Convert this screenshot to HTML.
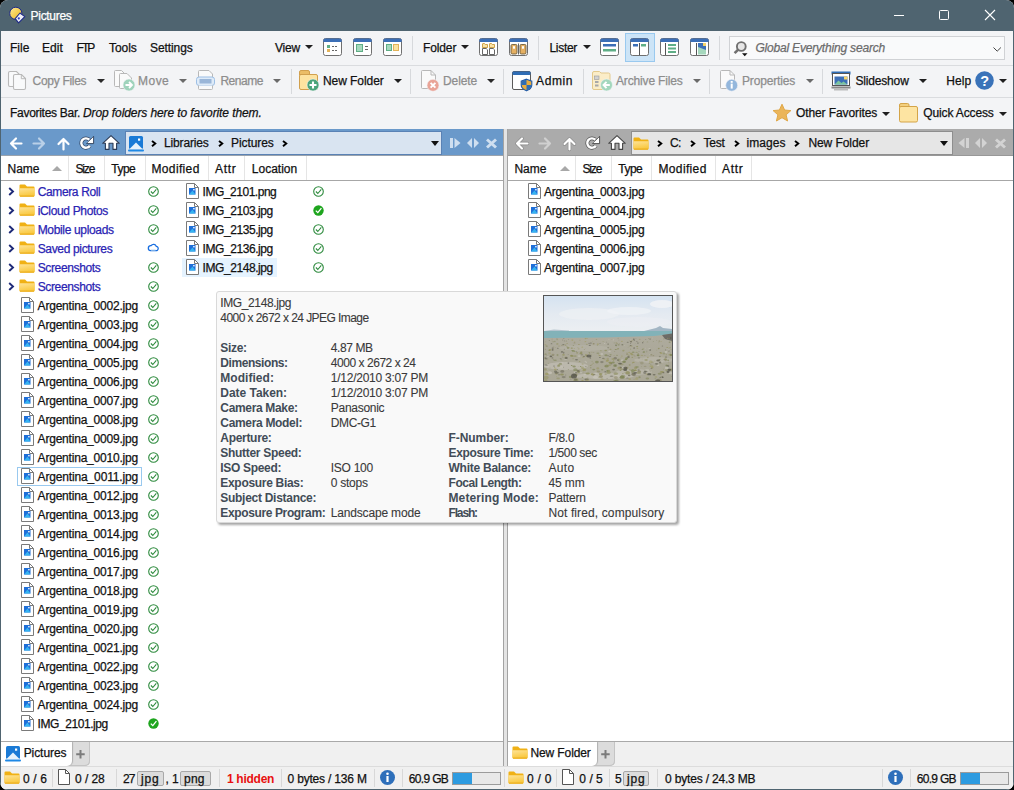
<!DOCTYPE html><html><head><meta charset="utf-8"><style>
*{margin:0;padding:0;box-sizing:border-box}
html,body{width:1014px;height:790px;overflow:hidden;background:#000}
body{font-family:"Liberation Sans",sans-serif;font-size:11.5px;color:#1a1a1a;position:relative}
.ab{position:absolute}
.t{position:absolute;white-space:nowrap;-webkit-text-stroke:0.25px currentColor}
.win{position:absolute;left:0;top:0;width:1014px;height:790px;background:#f3f4f6;border-radius:8px;overflow:hidden}
svg{position:absolute;overflow:visible}
</style></head><body>
<div class="win">
<svg width="0" height="0" style="position:absolute"><defs><linearGradient id="fg" x1="0" y1="0" x2="0.3" y2="1"><stop offset="0" stop-color="#fee397"/><stop offset="1" stop-color="#f9c83e"/></linearGradient></defs></svg>
<div class="ab" style="left:0px;top:0px;width:1014px;height:31px;background:#4f6470;"></div>
<svg style="left:8px;top:6px" width="18" height="18" viewBox="0 0 18 18"><defs><linearGradient id="ag" x1="0" y1="0" x2="1" y2="1"><stop offset="0" stop-color="#fdeaa0"/><stop offset="0.5" stop-color="#f6cf55"/><stop offset="1" stop-color="#e9b830"/></linearGradient></defs><circle cx="7.8" cy="7.3" r="6.1" fill="url(#ag)" stroke="#1e2a88" stroke-width="1"/><path d="M12 7L16.8 10.6L10.6 16.8L7.2 12.6Z" fill="#efeff6" stroke="#1e2a88" stroke-width="1.1" stroke-linejoin="round"/><circle cx="10.8" cy="12.4" r="1.1" fill="#2b3cc8"/></svg>
<div class="t" style="left:30.6px;top:8.64px;font-size:12px;line-height:14.4px;color:#ffffff;font-weight:normal;font-style:normal;letter-spacing:-0.307px;">Pictures</div>
<div class="ab" style="left:894px;top:15px;width:10px;height:1px;background:#ffffff;"></div>
<div class="ab" style="left:939px;top:10px;width:10px;height:10px;border:1px solid #fff;border-radius:1.5px"></div>
<svg style="left:985px;top:10px" width="10" height="10" viewBox="0 0 10 10"><path d="M0 0L10 10M10 0L0 10" stroke="#fff" stroke-width="1.1"/></svg>
<div class="ab" style="left:0px;top:31px;width:1px;height:759px;background:#4f6470;"></div>
<div class="ab" style="left:1013px;top:31px;width:1px;height:759px;background:#4f6470;"></div>
<div class="ab" style="left:0px;top:789px;width:1014px;height:1px;background:#4f6470;"></div>
<div class="ab" style="left:1px;top:31px;width:1012px;height:34px;background:#f3f4f6;"></div>
<div class="t" style="left:10px;top:40.64px;font-size:12px;line-height:14.4px;color:#111;font-weight:normal;font-style:normal;letter-spacing:-0.012px;">File</div>
<div class="t" style="left:42px;top:40.64px;font-size:12px;line-height:14.4px;color:#111;font-weight:normal;font-style:normal;letter-spacing:0.041px;">Edit</div>
<div class="t" style="left:76.5px;top:40.64px;font-size:12px;line-height:14.4px;color:#111;font-weight:normal;font-style:normal;letter-spacing:-1.932px;">FTP</div>
<div class="t" style="left:109px;top:40.64px;font-size:12px;line-height:14.4px;color:#111;font-weight:normal;font-style:normal;letter-spacing:-0.053px;">Tools</div>
<div class="t" style="left:150px;top:40.64px;font-size:12px;line-height:14.4px;color:#111;font-weight:normal;font-style:normal;letter-spacing:-0.080px;">Settings</div>
<div class="t" style="left:275px;top:40.64px;font-size:12px;line-height:14.4px;color:#111;font-weight:normal;font-style:normal;letter-spacing:-0.198px;">View</div>
<svg style="left:305px;top:45px" width="8" height="4" viewBox="0 0 8 4"><path d="M0 0H8L4.0 4Z" fill="#1f1f1f"/></svg>
<svg style="left:323px;top:38px" width="19" height="18" viewBox="0 0 19 18"><rect x="0.5" y="0.5" width="18" height="17" rx="2" fill="#fff" stroke="#6f6f6f"/><rect x="0.5" y="0.5" width="18" height="3.5" rx="1.5" fill="#3c6fb6"/><rect x="0.5" y="2" width="18" height="2" fill="#3c6fb6"/><rect x="4" y="7" width="3" height="3" fill="#5fae86"/><rect x="4" y="11" width="3" height="3" fill="#e3b35a"/><path d="M9 8.5h2M12 8.5h2M9 12.5h2M12 12.5h2" stroke="#666" stroke-width="1"/></svg>
<svg style="left:353px;top:38px" width="19" height="18" viewBox="0 0 19 18"><rect x="0.5" y="0.5" width="18" height="17" rx="2" fill="#fff" stroke="#6f6f6f"/><rect x="0.5" y="0.5" width="18" height="3.5" rx="1.5" fill="#3c6fb6"/><rect x="0.5" y="2" width="18" height="2" fill="#3c6fb6"/><rect x="3.5" y="6.5" width="6" height="7" fill="#a6d8bd" stroke="#5fae86"/><path d="M12 8.5h3M12 11.5h3" stroke="#666"/></svg>
<svg style="left:383px;top:38px" width="19" height="18" viewBox="0 0 19 18"><rect x="0.5" y="0.5" width="18" height="17" rx="2" fill="#fff" stroke="#6f6f6f"/><rect x="0.5" y="0.5" width="18" height="3.5" rx="1.5" fill="#3c6fb6"/><rect x="0.5" y="2" width="18" height="2" fill="#3c6fb6"/><rect x="3.5" y="6.5" width="5" height="6" fill="#a6d8bd" stroke="#5fae86"/><rect x="10.5" y="6.5" width="5" height="6" fill="#fbe2a0" stroke="#e3b35a"/></svg>
<div class="ab" style="left:412px;top:36px;width:1px;height:24px;background:#d7d9dc;"></div>
<div class="t" style="left:423px;top:40.64px;font-size:12px;line-height:14.4px;color:#111;font-weight:normal;font-style:normal;letter-spacing:-0.123px;">Folder</div>
<svg style="left:461px;top:45px" width="8" height="4" viewBox="0 0 8 4"><path d="M0 0H8L4.0 4Z" fill="#1f1f1f"/></svg>
<svg style="left:479px;top:38px" width="19" height="18" viewBox="0 0 19 18"><rect x="0.5" y="0.5" width="18" height="17" rx="2" fill="#fff" stroke="#6f6f6f"/><rect x="0.5" y="0.5" width="18" height="3.5" rx="1.5" fill="#3c6fb6"/><rect x="0.5" y="2" width="18" height="2" fill="#3c6fb6"/><path d="M3.5 9.5V6Q3.5 5.5 4 5.5H5.5L6.3 6.5H8.5V9.5Z" fill="#fbe3a6" stroke="#c99a3a" stroke-width="0.9"/><path d="M3.5 10.5H7.2L8.5 11.8V16.5H3.5Z" fill="#fff" stroke="#555" stroke-width="0.9"/><path d="M10.5 9.5V6Q10.5 5.5 11 5.5H12.5L13.3 6.5H15.5V9.5Z" fill="#fbe3a6" stroke="#c99a3a" stroke-width="0.9"/><path d="M10.5 10.5H14.2L15.5 11.8V16.5H10.5Z" fill="#fff" stroke="#555" stroke-width="0.9"/></svg>
<svg style="left:509px;top:38px" width="19" height="18" viewBox="0 0 19 18"><rect x="0.5" y="0.5" width="18" height="17" rx="2" fill="#fff" stroke="#6f6f6f"/><rect x="0.5" y="0.5" width="18" height="3.5" rx="1.5" fill="#3c6fb6"/><rect x="0.5" y="2" width="18" height="2" fill="#3c6fb6"/><rect x="2" y="6.5" width="6" height="9.5" rx="1.2" fill="#e5b062" stroke="#6b5a3a" stroke-width="0.9"/><rect x="11" y="6.5" width="6" height="9.5" rx="1.2" fill="#e5b062" stroke="#6b5a3a" stroke-width="0.9"/><rect x="4" y="8.2" width="2" height="2.5" fill="#fff"/><rect x="13" y="8.2" width="2" height="2.5" fill="#fff"/><path d="M9.5 5.5v11" stroke="#555" stroke-width="0.9"/></svg>
<div class="ab" style="left:538px;top:36px;width:1px;height:24px;background:#d7d9dc;"></div>
<div class="t" style="left:549.5px;top:40.64px;font-size:12px;line-height:14.4px;color:#111;font-weight:normal;font-style:normal;letter-spacing:-0.309px;">Lister</div>
<svg style="left:583px;top:45px" width="8" height="4" viewBox="0 0 8 4"><path d="M0 0H8L4.0 4Z" fill="#1f1f1f"/></svg>
<svg style="left:600px;top:38px" width="19" height="18" viewBox="0 0 19 18"><rect x="0.5" y="0.5" width="18" height="17" rx="2" fill="#fff" stroke="#6f6f6f"/><rect x="0.5" y="0.5" width="18" height="3.5" rx="1.5" fill="#3c6fb6"/><rect x="0.5" y="2" width="18" height="2" fill="#3c6fb6"/><rect x="3" y="6" width="13" height="2.5" fill="#3c6fb6"/><rect x="3" y="11" width="13" height="2.5" fill="#5fae86"/></svg>
<div class="ab" style="left:625px;top:33px;width:30px;height:29px;background:#cce4f7;border:1px solid #99c9ef"></div>
<svg style="left:630px;top:38px" width="19" height="18" viewBox="0 0 19 18"><rect x="0.5" y="0.5" width="18" height="17" rx="2" fill="#fff" stroke="#6f6f6f"/><rect x="0.5" y="0.5" width="18" height="3.5" rx="1.5" fill="#3c6fb6"/><rect x="0.5" y="2" width="18" height="2" fill="#3c6fb6"/><rect x="3" y="6" width="5" height="2.5" fill="#3c6fb6"/><rect x="11" y="6" width="5" height="2.5" fill="#5fae86"/><path d="M9.5 5v12" stroke="#555"/></svg>
<svg style="left:660px;top:38px" width="19" height="18" viewBox="0 0 19 18"><rect x="0.5" y="0.5" width="18" height="17" rx="2" fill="#fff" stroke="#6f6f6f"/><rect x="0.5" y="0.5" width="18" height="3.5" rx="1.5" fill="#3c6fb6"/><rect x="0.5" y="2" width="18" height="2" fill="#3c6fb6"/><path d="M5.5 5v12" stroke="#555"/><rect x="8" y="6" width="8" height="2" fill="#5fae86"/><rect x="8" y="9.5" width="8" height="2" fill="#5fae86"/><rect x="8" y="13" width="8" height="2" fill="#5fae86"/></svg>
<svg style="left:690px;top:38px" width="19" height="18" viewBox="0 0 19 18"><rect x="0.5" y="0.5" width="18" height="17" rx="2" fill="#fff" stroke="#6f6f6f"/><rect x="0.5" y="0.5" width="18" height="3.5" rx="1.5" fill="#3c6fb6"/><rect x="0.5" y="2" width="18" height="2" fill="#3c6fb6"/><path d="M6.5 5v12" stroke="#555"/><path d="M8 5h6v3l2 2v6.5h-8z" fill="#a6d8bd"/><path d="M8 5h5l3 3v4l-8-3z" fill="#3c6fb6"/><rect x="13" y="5" width="3" height="3" fill="#f6d46a"/></svg>
<div class="ab" style="left:719px;top:36px;width:1px;height:24px;background:#d7d9dc;"></div>
<div class="ab" style="left:729px;top:36px;width:276px;height:24px;background:#f9fafb;border:1px solid #d0d2d5"></div>
<svg style="left:733px;top:41px" width="16" height="16" viewBox="0 0 16 16"><circle cx="8.3" cy="5.5" r="4.4" fill="#e6e6e6" stroke="#707070" stroke-width="1.9"/><path d="M5.2 8.6L1.6 12.2" stroke="#707070" stroke-width="2.6"/><path d="M9 12.3h5.5l-2.75 3z" fill="#111"/></svg>
<div class="t" style="left:755.4px;top:40.64px;font-size:12px;line-height:14.4px;color:#6b6b6b;font-weight:normal;font-style:italic;letter-spacing:-0.186px;">Global Everything search</div>
<svg style="left:993px;top:46.5px" width="9" height="5" viewBox="0 0 9 5"><path d="M0.5 0.5L4.2 4.2L7.9 0.5" stroke="#444" fill="none" stroke-width="1"/></svg>
<div class="ab" style="left:1px;top:65px;width:1012px;height:1px;background:#dadcdf;"></div>
<svg style="left:8px;top:71px" width="20" height="20" viewBox="0 0 20 20"><path d="M0.5 2Q0.5 0.5 2 0.5H8.5L11.5 3.5V14Q11.5 15.5 10 15.5H2Q0.5 15.5 0.5 14Z" fill="#f9fafb" stroke="#b9b9b9" stroke-width="1.1"/><path d="M5.5 5Q5.5 3.5 7 3.5H13.5L17.5 7.5V17Q17.5 18.5 16 18.5H7Q5.5 18.5 5.5 17Z" fill="#f9fafb" stroke="#b9b9b9" stroke-width="1.1"/><path d="M13.3 3.7V7.7H17.3" fill="none" stroke="#b9b9b9" stroke-width="1"/></svg>
<div class="t" style="left:32.5px;top:73.64px;font-size:12px;line-height:14.4px;color:#8d8d8d;font-weight:normal;font-style:normal;letter-spacing:-0.287px;">Copy Files</div>
<svg style="left:97px;top:79px" width="8" height="4" viewBox="0 0 8 4"><path d="M0 0H8L4.0 4Z" fill="#2a2a2a"/></svg>
<svg style="left:114px;top:70px" width="22" height="22" viewBox="0 0 22 22"><path d="M0.5 1.5Q0.5 0.5 1.5 0.5H7.5L10.5 3.5V16.5H1.5Q0.5 16.5 0.5 15.5Z" fill="#fafafa" stroke="#b8b8b8"/><path d="M5.5 4.5Q5.5 3.5 6.5 3.5H13L17.5 8V18.5H6.5Q5.5 18.5 5.5 17.5Z" fill="#fafafa" stroke="#b8b8b8"/><circle cx="15" cy="15" r="6" fill="#9fd3bb" stroke="#f3f4f6" stroke-width="0.6"/><path d="M11.5 15h6M15 12l3 3l-3 3" stroke="#fff" stroke-width="1.8" fill="none"/></svg>
<div class="t" style="left:138px;top:73.64px;font-size:12px;line-height:14.4px;color:#8d8d8d;font-weight:normal;font-style:normal;letter-spacing:0.485px;">Move</div>
<svg style="left:178.5px;top:79px" width="8" height="4" viewBox="0 0 8 4"><path d="M0 0H8L4.0 4Z" fill="#6a6a6a"/></svg>
<svg style="left:196px;top:70px" width="20" height="21" viewBox="0 0 20 21"><path d="M2.5 7V1.5Q2.5 0.5 3.5 0.5H13L16.5 4V7" fill="#fafafa" stroke="#b8b8b8"/><rect x="0.5" y="7" width="18" height="8.5" rx="2.5" fill="#deebf8" stroke="#9dbfe5"/><rect x="3.5" y="9" width="12" height="4.5" fill="#9ab6d8"/><path d="M2.5 15.5V18.5Q2.5 19.5 3.5 19.5H15.5Q16.5 19.5 16.5 18.5V15.5" fill="#fafafa" stroke="#b8b8b8"/></svg>
<div class="t" style="left:220.4px;top:73.64px;font-size:12px;line-height:14.4px;color:#8d8d8d;font-weight:normal;font-style:normal;letter-spacing:-0.452px;">Rename</div>
<svg style="left:273px;top:79px" width="8" height="4" viewBox="0 0 8 4"><path d="M0 0H8L4.0 4Z" fill="#6a6a6a"/></svg>
<div class="ab" style="left:291px;top:69px;width:1px;height:25px;background:#d7d9dc;"></div>
<svg style="left:299px;top:70px" width="22" height="22" viewBox="0 0 22 22"><path d="M0.5 5V2Q0.5 0.5 2 0.5H9Q10.5 0.5 10.5 2V4.5" fill="#ebbd66" stroke="#d1a04e"/><rect x="0.5" y="4.5" width="18" height="15" rx="1.5" fill="#fde3a0" stroke="#d1a04e"/><path d="M1 4.5h10" stroke="#d1a04e"/><circle cx="14" cy="15" r="6" fill="#4ba47a" stroke="#f3f4f6" stroke-width="0.6"/><path d="M14 11.5v7M10.5 15h7" stroke="#fff" stroke-width="2.1"/></svg>
<div class="t" style="left:323px;top:73.64px;font-size:12px;line-height:14.4px;color:#111;font-weight:normal;font-style:normal;letter-spacing:-0.062px;">New Folder</div>
<svg style="left:393.5px;top:79px" width="8" height="4" viewBox="0 0 8 4"><path d="M0 0H8L4.0 4Z" fill="#1f1f1f"/></svg>
<div class="ab" style="left:410px;top:69px;width:1px;height:25px;background:#d7d9dc;"></div>
<svg style="left:421px;top:70px" width="20" height="22" viewBox="0 0 20 22"><path d="M0.5 1.5Q0.5 0.5 1.5 0.5H10L14.5 5V18.5H1.5Q0.5 18.5 0.5 17.5Z" fill="#fafafa" stroke="#b8b8b8"/><path d="M10 0.5V5H14.5" fill="none" stroke="#b8b8b8"/><circle cx="12" cy="15.3" r="6" fill="#e9a497" stroke="#f3f4f6" stroke-width="0.6"/><path d="M9.6 12.9l4.8 4.8M14.4 12.9l-4.8 4.8" stroke="#fff" stroke-width="1.9"/></svg>
<div class="t" style="left:443px;top:73.64px;font-size:12px;line-height:14.4px;color:#8d8d8d;font-weight:normal;font-style:normal;letter-spacing:-0.098px;">Delete</div>
<svg style="left:487px;top:79px" width="8" height="4" viewBox="0 0 8 4"><path d="M0 0H8L4.0 4Z" fill="#2a2a2a"/></svg>
<div class="ab" style="left:503px;top:69px;width:1px;height:25px;background:#d7d9dc;"></div>
<svg style="left:512px;top:71px" width="21" height="20" viewBox="0 0 21 20"><rect x="0.5" y="0.5" width="18" height="18" rx="1.5" fill="#fff" stroke="#5a5a5a"/><rect x="0.5" y="0.5" width="18" height="3.5" rx="1" fill="#2f6db5"/><path d="M14.5 8.2L19.8 10.2V14C19.8 17 17.5 18.6 14.5 19.8C11.5 18.6 9.2 17 9.2 14V10.2Z" fill="#e9ac3e" stroke="#1f5aa8" stroke-width="1.1"/><path d="M14.5 8.5V14H9.5V14C9.5 11 9.5 10.4 9.5 10.4Z" fill="#2f6db5"/><path d="M14.5 14H19.5C19.5 17 17.3 18.5 14.5 19.5Z" fill="#2f6db5"/></svg>
<div class="t" style="left:536px;top:73.64px;font-size:12px;line-height:14.4px;color:#111;font-weight:normal;font-style:normal;letter-spacing:0.622px;">Admin</div>
<div class="ab" style="left:583px;top:69px;width:1px;height:25px;background:#d7d9dc;"></div>
<svg style="left:592px;top:71px" width="22" height="22" viewBox="0 0 22 22"><path d="M0.5 2Q0.5 0.5 2 0.5H7.5L9 2H16.5Q18 2 18 3.5V17.2Q18 18.5 16.5 18.5H2Q0.5 18.5 0.5 17V2Z" fill="#fbedc8" stroke="#e3c98c"/><rect x="2.5" y="5" width="4.5" height="3.5" fill="#d2d2d2" stroke="#9a9a9a" stroke-width="0.6"/><rect x="3" y="10" width="3.5" height="2" fill="#a8a8a8"/><rect x="3" y="13.5" width="3.5" height="2" fill="#a8a8a8"/><circle cx="14.5" cy="14" r="6" fill="#a3d7bd" stroke="#f3f4f6" stroke-width="0.6"/><path d="M17.8 14h-6M14.5 10.8l-3 3.2l3 3.2" stroke="#fff" stroke-width="1.9" fill="none"/></svg>
<div class="t" style="left:616px;top:73.64px;font-size:12px;line-height:14.4px;color:#8d8d8d;font-weight:normal;font-style:normal;letter-spacing:-0.157px;">Archive Files</div>
<svg style="left:692.5px;top:79px" width="8" height="4" viewBox="0 0 8 4"><path d="M0 0H8L4.0 4Z" fill="#6a6a6a"/></svg>
<div class="ab" style="left:709px;top:69px;width:1px;height:25px;background:#d7d9dc;"></div>
<svg style="left:720px;top:70px" width="20" height="22" viewBox="0 0 20 22"><path d="M0.5 1.5Q0.5 0.5 1.5 0.5H10L14.5 5V18.5H1.5Q0.5 18.5 0.5 17.5Z" fill="#fafafa" stroke="#b8b8b8"/><path d="M10 0.5V5H14.5" fill="none" stroke="#b8b8b8"/><circle cx="11.7" cy="15.2" r="6" fill="#94b7dc" stroke="#f3f4f6" stroke-width="0.6"/><rect x="10.7" y="13.6" width="2" height="5" fill="#fff"/><rect x="10.7" y="11" width="2" height="1.8" fill="#fff"/></svg>
<div class="t" style="left:742px;top:73.64px;font-size:12px;line-height:14.4px;color:#8d8d8d;font-weight:normal;font-style:normal;letter-spacing:-0.155px;">Properties</div>
<svg style="left:805.5px;top:79px" width="8" height="4" viewBox="0 0 8 4"><path d="M0 0H8L4.0 4Z" fill="#6a6a6a"/></svg>
<div class="ab" style="left:822px;top:69px;width:1px;height:25px;background:#d7d9dc;"></div>
<svg style="left:831px;top:71px" width="20" height="20" viewBox="0 0 20 20"><rect x="0.5" y="0.5" width="19" height="3" fill="#2f6db5"/><rect x="1.5" y="2.5" width="17" height="12" fill="#fff" stroke="#555"/><path d="M3.5 5.5h13v8h-13z" fill="#3c6fb6"/><path d="M3.5 13.5l4-4l3 2.5l2-1.5l4 3z" fill="#7cc59e"/><rect x="13" y="5.5" width="3.5" height="3" fill="#f6d46a"/><path d="M0.5 15.5h19v2h-19z" fill="#888"/><path d="M3 17.5h14v2h-14z" fill="#bbb"/></svg>
<div class="t" style="left:855.4px;top:73.64px;font-size:12px;line-height:14.4px;color:#111;font-weight:normal;font-style:normal;letter-spacing:-0.162px;">Slideshow</div>
<svg style="left:919px;top:79px" width="8" height="4" viewBox="0 0 8 4"><path d="M0 0H8L4.0 4Z" fill="#1f1f1f"/></svg>
<div class="t" style="left:946.3px;top:73.64px;font-size:12px;line-height:14.4px;color:#111;font-weight:normal;font-style:normal;letter-spacing:0.040px;">Help</div>
<svg style="left:975px;top:71px" width="20" height="20" viewBox="0 0 20 20"><circle cx="9.5" cy="9.5" r="9.3" fill="#3a73b9"/><text x="9.6" y="14.6" text-anchor="middle" font-family="Liberation Sans" font-weight="bold" font-size="14.5" fill="#fff">?</text></svg>
<svg style="left:999px;top:79px" width="8" height="4" viewBox="0 0 8 4"><path d="M0 0H8L4.0 4Z" fill="#1f1f1f"/></svg>
<div class="ab" style="left:1px;top:97px;width:1012px;height:1px;background:#dadcdf;"></div>
<div class="t" style="left:10px;top:105.64px;font-size:12px;line-height:14.4px;color:#111;font-weight:normal;font-style:normal;letter-spacing:-0.287px;">Favorites Bar.</div>
<div class="t" style="left:83px;top:105.64px;font-size:12px;line-height:14.4px;color:#111;font-weight:normal;font-style:italic;letter-spacing:-0.097px;">Drop folders here to favorite them.</div>
<svg style="left:772px;top:103px" width="20" height="19" viewBox="0 0 20 19"><path d="M10 1.2l2.6 5.8l6.3 0.6l-4.8 4.2l1.5 6.2l-5.6-3.3l-5.6 3.3l1.5-6.2l-4.8-4.2l6.3-0.6z" fill="#ebb55a" stroke="#e0a848" stroke-width="1" stroke-linejoin="round"/></svg>
<div class="t" style="left:796px;top:105.64px;font-size:12px;line-height:14.4px;color:#111;font-weight:normal;font-style:normal;letter-spacing:-0.100px;">Other Favorites</div>
<svg style="left:882px;top:112px" width="8" height="4" viewBox="0 0 8 4"><path d="M0 0H8L4.0 4Z" fill="#1f1f1f"/></svg>
<svg style="left:899px;top:103px" width="20" height="20" viewBox="0 0 20 20"><path d="M0.5 4V2Q0.5 0.5 2 0.5H8.5Q10 0.5 10 2V3.5" fill="#f2cf7e" stroke="#d4a448"/><rect x="0.5" y="3.5" width="18" height="15.5" rx="1.5" fill="#fde4a2" stroke="#d4a448"/></svg>
<div class="t" style="left:923.3px;top:105.64px;font-size:12px;line-height:14.4px;color:#111;font-weight:normal;font-style:normal;letter-spacing:-0.139px;">Quick Access</div>
<svg style="left:999px;top:112px" width="8" height="4" viewBox="0 0 8 4"><path d="M0 0H8L4.0 4Z" fill="#1f1f1f"/></svg>
<div class="ab" style="left:1px;top:129px;width:502px;height:27px;background:#6a99ca;"></div>
<div class="ab" style="left:503px;top:129px;width:1px;height:637px;background:#a3a3a3;"></div>
<div class="ab" style="left:504px;top:129px;width:3px;height:637px;background:#e4e4e4;"></div>
<div class="ab" style="left:507px;top:129px;width:1px;height:637px;background:#a3a3a3;"></div>
<div class="ab" style="left:508px;top:129px;width:505px;height:27px;background:#ababab;"></div>
<div class="ab" style="left:1px;top:155px;width:502px;height:1px;background:#9aa3ad;"></div>
<div class="ab" style="left:508px;top:155px;width:505px;height:1px;background:#989898;"></div>
<div class="ab" style="left:1px;top:156px;width:502px;height:1px;background:#d4d4d4;"></div>
<div class="ab" style="left:508px;top:156px;width:505px;height:1px;background:#d4d4d4;"></div>
<svg style="left:8.5px;top:136.5px" width="14" height="13" viewBox="0 0 14 13"><path d="M12.5 6.5H2M7 1.5L2 6.5L7 11.5" stroke="#fff" stroke-width="2.2" fill="none" stroke-linejoin="round" stroke-linecap="round"/></svg>
<svg style="left:32.5px;top:136.5px" width="14" height="13" viewBox="0 0 14 13"><path d="M0.5 6.5H11M6 1.5L11 6.5L6 11.5" stroke="#b9d0e8" stroke-width="2.2" fill="none" stroke-linejoin="round" stroke-linecap="round"/></svg>
<svg style="left:56.5px;top:136.5px" width="13" height="13" viewBox="0 0 13 13"><path d="M6.5 12.5V2M1.5 7L6.5 2L11.5 7" stroke="#fff" stroke-width="2.2" fill="none" stroke-linejoin="round" stroke-linecap="round"/></svg>
<svg style="left:80px;top:136px" width="14" height="14" viewBox="0 0 14 14"><path d="M9.3 3.7A4.7 4.7 0 1 0 9.85 9.7" stroke="#2a3a55" stroke-width="3.8" fill="none" opacity="0.85"/><path d="M6.6 7.6H13.6V0.3Z" fill="#fff" stroke="#2a3a55" stroke-width="0.9" stroke-linejoin="round"/><path d="M9.3 3.7A4.7 4.7 0 1 0 9.85 9.7" stroke="#fff" stroke-width="2.4" fill="none"/><path d="M7.3 7H13V1.6Z" fill="#fff"/></svg>
<svg style="left:102px;top:135px" width="18" height="15" viewBox="0 0 18 15"><path d="M9 0.6L17.3 8.3H14.6V14.4H11V8.3H7V14.4H3.4V8.3H0.7Z" fill="#fff" stroke="#2a3a55" stroke-width="1.1" stroke-linejoin="round"/></svg>
<svg style="left:514.5px;top:136.5px" width="14" height="13" viewBox="0 0 14 13"><path d="M12.5 6.5H2M7 1.5L2 6.5L7 11.5" stroke="#666" stroke-width="3.3" fill="none" stroke-linejoin="round" stroke-linecap="round" opacity="0.55"/><path d="M12.5 6.5H2M7 1.5L2 6.5L7 11.5" stroke="#fff" stroke-width="2.2" fill="none" stroke-linejoin="round" stroke-linecap="round"/></svg>
<svg style="left:538.5px;top:136.5px" width="14" height="13" viewBox="0 0 14 13"><path d="M0.5 6.5H11M6 1.5L11 6.5L6 11.5" stroke="#d0d0d0" stroke-width="2.2" fill="none" stroke-linejoin="round" stroke-linecap="round"/></svg>
<svg style="left:562.5px;top:136.5px" width="13" height="13" viewBox="0 0 13 13"><path d="M6.5 12.5V2M1.5 7L6.5 2L11.5 7" stroke="#666" stroke-width="3.3" fill="none" stroke-linejoin="round" stroke-linecap="round" opacity="0.55"/><path d="M6.5 12.5V2M1.5 7L6.5 2L11.5 7" stroke="#fff" stroke-width="2.2" fill="none" stroke-linejoin="round" stroke-linecap="round"/></svg>
<svg style="left:586px;top:136px" width="14" height="14" viewBox="0 0 14 14"><path d="M9.3 3.7A4.7 4.7 0 1 0 9.85 9.7" stroke="#444" stroke-width="3.8" fill="none" opacity="0.85"/><path d="M6.6 7.6H13.6V0.3Z" fill="#fff" stroke="#444" stroke-width="0.9" stroke-linejoin="round"/><path d="M9.3 3.7A4.7 4.7 0 1 0 9.85 9.7" stroke="#fff" stroke-width="2.4" fill="none"/><path d="M7.3 7H13V1.6Z" fill="#fff"/></svg>
<svg style="left:608px;top:135px" width="18" height="15" viewBox="0 0 18 15"><path d="M9 0.6L17.3 8.3H14.6V14.4H11V8.3H7V14.4H3.4V8.3H0.7Z" fill="#fff" stroke="#444" stroke-width="1.1" stroke-linejoin="round"/></svg>
<div class="ab" style="left:125px;top:131px;width:317px;height:24px;background:#d9e4f1;border:1px solid #5a82b5"></div>
<svg style="left:128px;top:136px" width="16" height="16" viewBox="0 0 16 16"><rect x="1" y="0" width="14" height="13" rx="1.5" fill="#1a7ad6"/><path d="M1.5 13L8 6.5L14.5 13Z" fill="#e6f2fc"/><rect x="10" y="2.5" width="2.2" height="2.2" fill="#fff"/><rect x="0" y="13.5" width="16" height="2" rx="1" fill="#1e88e5"/></svg>
<svg style="left:151px;top:140px" width="6" height="8" viewBox="0 0 6 8"><path d="M1 0.9L4.3 3.6L1 6.3" stroke="#000" stroke-width="1.9" fill="none"/></svg>
<div class="t" style="left:164px;top:135.64px;font-size:12px;line-height:14.4px;color:#111;font-weight:normal;font-style:normal;letter-spacing:-0.152px;">Libraries</div>
<svg style="left:218px;top:140px" width="6" height="8" viewBox="0 0 6 8"><path d="M1 0.9L4.3 3.6L1 6.3" stroke="#000" stroke-width="1.9" fill="none"/></svg>
<div class="t" style="left:231px;top:135.64px;font-size:12px;line-height:14.4px;color:#111;font-weight:normal;font-style:normal;letter-spacing:-0.078px;">Pictures</div>
<svg style="left:282px;top:140px" width="6" height="8" viewBox="0 0 6 8"><path d="M1 0.9L4.3 3.6L1 6.3" stroke="#000" stroke-width="1.9" fill="none"/></svg>
<svg style="left:431px;top:141px" width="8" height="5" viewBox="0 0 8 5"><path d="M0 0H8L4.0 5Z" fill="#111"/></svg>
<svg style="left:450px;top:137px" width="11" height="11" viewBox="0 0 11 11"><rect x="0" y="1" width="3" height="10" fill="#cfdff0"/><path d="M4.5 1L10.5 6L4.5 11Z" fill="#cfdff0"/></svg>
<svg style="left:467px;top:137px" width="12" height="11" viewBox="0 0 12 11"><path d="M5 1L0 6L5 11Z" fill="#cfdff0"/><path d="M7 1L12 6L7 11Z" fill="#cfdff0"/></svg>
<svg style="left:486px;top:139px" width="11" height="9" viewBox="0 0 11 9"><path d="M1 0.5L10 8.5M10 0.5L1 8.5" stroke="#cfdff0" stroke-width="3"/></svg>
<div class="ab" style="left:631px;top:131px;width:322px;height:24px;background:#e6e6e6;border:1px solid #8e8e8e"></div>
<svg style="left:633px;top:137px" width="16" height="13" viewBox="0 0 16 13"><path d="M0.5 1.5Q0.5 0.5 1.5 0.5H6L8 2.5H14.5Q15.5 2.5 15.5 3.5V11.5Q15.5 12.5 14.5 12.5H1.5Q0.5 12.5 0.5 11.5Z" fill="#f0b115"/><path d="M0.5 4.2H15.5V11.5Q15.5 12.5 14.5 12.5H1.5Q0.5 12.5 0.5 11.5Z" fill="url(#fg)"/><path d="M1 12.1H15" stroke="#e9a614" stroke-width="0.9"/></svg>
<svg style="left:657px;top:140px" width="6" height="8" viewBox="0 0 6 8"><path d="M1 0.9L4.3 3.6L1 6.3" stroke="#000" stroke-width="1.9" fill="none"/></svg>
<div class="t" style="left:670px;top:135.64px;font-size:12px;line-height:14.4px;color:#111;font-weight:normal;font-style:normal;letter-spacing:-0.700px;">C:</div>
<svg style="left:690px;top:140px" width="6" height="8" viewBox="0 0 6 8"><path d="M1 0.9L4.3 3.6L1 6.3" stroke="#000" stroke-width="1.9" fill="none"/></svg>
<div class="t" style="left:703.6px;top:135.64px;font-size:12px;line-height:14.4px;color:#111;font-weight:normal;font-style:normal;letter-spacing:-0.269px;">Test</div>
<svg style="left:734px;top:140px" width="6" height="8" viewBox="0 0 6 8"><path d="M1 0.9L4.3 3.6L1 6.3" stroke="#000" stroke-width="1.9" fill="none"/></svg>
<div class="t" style="left:746.6px;top:135.64px;font-size:12px;line-height:14.4px;color:#111;font-weight:normal;font-style:normal;letter-spacing:0.023px;">images</div>
<svg style="left:794px;top:140px" width="6" height="8" viewBox="0 0 6 8"><path d="M1 0.9L4.3 3.6L1 6.3" stroke="#000" stroke-width="1.9" fill="none"/></svg>
<div class="t" style="left:808.4px;top:135.64px;font-size:12px;line-height:14.4px;color:#111;font-weight:normal;font-style:normal;letter-spacing:-0.062px;">New Folder</div>
<svg style="left:939.5px;top:141px" width="8" height="5" viewBox="0 0 8 5"><path d="M0 0H8L4.0 5Z" fill="#111"/></svg>
<svg style="left:958px;top:137px" width="11" height="11" viewBox="0 0 11 11"><path d="M6.5 1L0.5 6L6.5 11Z" fill="#d3d3d3"/><rect x="8" y="1" width="3" height="10" fill="#d3d3d3"/></svg>
<svg style="left:975px;top:137px" width="12" height="11" viewBox="0 0 12 11"><path d="M5 1L0 6L5 11Z" fill="#d3d3d3"/><path d="M7 1L12 6L7 11Z" fill="#d3d3d3"/></svg>
<svg style="left:995px;top:139px" width="11" height="9" viewBox="0 0 11 9"><path d="M1 0.5L10 8.5M10 0.5L1 8.5" stroke="#d3d3d3" stroke-width="3"/></svg>
<div class="ab" style="left:1px;top:156px;width:502px;height:24px;background:#ffffff;"></div>
<div class="ab" style="left:1px;top:180px;width:502px;height:1px;background:#a7a7a7;"></div>
<div class="ab" style="left:508px;top:156px;width:505px;height:24px;background:#ffffff;"></div>
<div class="ab" style="left:508px;top:180px;width:505px;height:1px;background:#a7a7a7;"></div>
<div class="t" style="left:7.6px;top:161.64px;font-size:12px;line-height:14.4px;color:#111;font-weight:normal;font-style:normal;letter-spacing:-0.070px;">Name</div>
<svg style="left:52px;top:166px" width="10" height="5" viewBox="0 0 10 5"><path d="M0 5L5 0L10 5Z" fill="#a8a8a8"/></svg>
<div class="ab" style="left:68px;top:156px;width:1px;height:24px;background:#e5e5e5;"></div>
<div class="ab" style="left:104px;top:156px;width:1px;height:24px;background:#e5e5e5;"></div>
<div class="ab" style="left:145px;top:156px;width:1px;height:24px;background:#e5e5e5;"></div>
<div class="ab" style="left:208px;top:156px;width:1px;height:24px;background:#e5e5e5;"></div>
<div class="ab" style="left:244px;top:156px;width:1px;height:24px;background:#e5e5e5;"></div>
<div class="ab" style="left:306px;top:156px;width:1px;height:24px;background:#e5e5e5;"></div>
<div class="t" style="left:75.4px;top:161.64px;font-size:12px;line-height:14.4px;color:#111;font-weight:normal;font-style:normal;letter-spacing:-1.115px;">Size</div>
<div class="t" style="left:111.3px;top:161.64px;font-size:12px;line-height:14.4px;color:#111;font-weight:normal;font-style:normal;letter-spacing:-0.539px;">Type</div>
<div class="t" style="left:151.5px;top:161.64px;font-size:12px;line-height:14.4px;color:#111;font-weight:normal;font-style:normal;letter-spacing:0.349px;">Modified</div>
<div class="t" style="left:215px;top:161.64px;font-size:12px;line-height:14.4px;color:#111;font-weight:normal;font-style:normal;letter-spacing:0.711px;">Attr</div>
<div class="t" style="left:251.8px;top:161.64px;font-size:12px;line-height:14.4px;color:#111;font-weight:normal;font-style:normal;letter-spacing:0.004px;">Location</div>
<div class="t" style="left:514.5px;top:161.64px;font-size:12px;line-height:14.4px;color:#111;font-weight:normal;font-style:normal;letter-spacing:-0.070px;">Name</div>
<svg style="left:560px;top:166px" width="10" height="5" viewBox="0 0 10 5"><path d="M0 5L5 0L10 5Z" fill="#a8a8a8"/></svg>
<div class="ab" style="left:575px;top:156px;width:1px;height:24px;background:#e5e5e5;"></div>
<div class="ab" style="left:611px;top:156px;width:1px;height:24px;background:#e5e5e5;"></div>
<div class="ab" style="left:651px;top:156px;width:1px;height:24px;background:#e5e5e5;"></div>
<div class="ab" style="left:715px;top:156px;width:1px;height:24px;background:#e5e5e5;"></div>
<div class="ab" style="left:751px;top:156px;width:1px;height:24px;background:#e5e5e5;"></div>
<div class="t" style="left:582.4px;top:161.64px;font-size:12px;line-height:14.4px;color:#111;font-weight:normal;font-style:normal;letter-spacing:-1.115px;">Size</div>
<div class="t" style="left:618.3px;top:161.64px;font-size:12px;line-height:14.4px;color:#111;font-weight:normal;font-style:normal;letter-spacing:-0.539px;">Type</div>
<div class="t" style="left:658.5px;top:161.64px;font-size:12px;line-height:14.4px;color:#111;font-weight:normal;font-style:normal;letter-spacing:0.349px;">Modified</div>
<div class="t" style="left:722px;top:161.64px;font-size:12px;line-height:14.4px;color:#111;font-weight:normal;font-style:normal;letter-spacing:0.711px;">Attr</div>
<div class="ab" style="left:1px;top:181px;width:502px;height:560px;background:#ffffff;"></div>
<div class="ab" style="left:508px;top:181px;width:505px;height:560px;background:#ffffff;"></div>
<div class="ab" style="left:17px;top:467px;width:125px;height:19px;background:transparent;border:1px solid #99c9ef"></div>
<div class="ab" style="left:182px;top:258px;width:95px;height:19px;background:#e5f3ff;"></div>
<svg style="left:8px;top:187px" width="7" height="9" viewBox="0 0 7 9"><path d="M1.2 1L5 4.5L1.2 8" stroke="#1e2a78" stroke-width="1.9" fill="none"/></svg>
<svg style="left:19px;top:184px" width="16" height="13" viewBox="0 0 16 13"><path d="M0.5 1.5Q0.5 0.5 1.5 0.5H6L8 2.5H14.5Q15.5 2.5 15.5 3.5V11.5Q15.5 12.5 14.5 12.5H1.5Q0.5 12.5 0.5 11.5Z" fill="#f0b115"/><path d="M0.5 4.2H15.5V11.5Q15.5 12.5 14.5 12.5H1.5Q0.5 12.5 0.5 11.5Z" fill="url(#fg)"/><path d="M1 12.1H15" stroke="#e9a614" stroke-width="0.9"/></svg>
<div class="t" style="left:37.7px;top:184.64px;font-size:12px;line-height:14.4px;color:#2a23b3;font-weight:normal;font-style:normal;letter-spacing:-0.367px;">Camera Roll</div>
<svg style="left:147.5px;top:186.0px" width="11" height="11" viewBox="0 0 11 11"><circle cx="5.5" cy="5.5" r="4.8" fill="none" stroke="#2e8b3e" stroke-width="1.1"/><path d="M2.9 5.5L4.8 7.5L8.3 3.4" stroke="#2e8b3e" stroke-width="1.1" fill="none"/></svg>
<svg style="left:8px;top:206px" width="7" height="9" viewBox="0 0 7 9"><path d="M1.2 1L5 4.5L1.2 8" stroke="#1e2a78" stroke-width="1.9" fill="none"/></svg>
<svg style="left:19px;top:203px" width="16" height="13" viewBox="0 0 16 13"><path d="M0.5 1.5Q0.5 0.5 1.5 0.5H6L8 2.5H14.5Q15.5 2.5 15.5 3.5V11.5Q15.5 12.5 14.5 12.5H1.5Q0.5 12.5 0.5 11.5Z" fill="#f0b115"/><path d="M0.5 4.2H15.5V11.5Q15.5 12.5 14.5 12.5H1.5Q0.5 12.5 0.5 11.5Z" fill="url(#fg)"/><path d="M1 12.1H15" stroke="#e9a614" stroke-width="0.9"/></svg>
<div class="t" style="left:37.7px;top:203.64px;font-size:12px;line-height:14.4px;color:#2a23b3;font-weight:normal;font-style:normal;letter-spacing:-0.342px;">iCloud Photos</div>
<svg style="left:147.5px;top:205.0px" width="11" height="11" viewBox="0 0 11 11"><circle cx="5.5" cy="5.5" r="4.8" fill="none" stroke="#2e8b3e" stroke-width="1.1"/><path d="M2.9 5.5L4.8 7.5L8.3 3.4" stroke="#2e8b3e" stroke-width="1.1" fill="none"/></svg>
<svg style="left:8px;top:225px" width="7" height="9" viewBox="0 0 7 9"><path d="M1.2 1L5 4.5L1.2 8" stroke="#1e2a78" stroke-width="1.9" fill="none"/></svg>
<svg style="left:19px;top:222px" width="16" height="13" viewBox="0 0 16 13"><path d="M0.5 1.5Q0.5 0.5 1.5 0.5H6L8 2.5H14.5Q15.5 2.5 15.5 3.5V11.5Q15.5 12.5 14.5 12.5H1.5Q0.5 12.5 0.5 11.5Z" fill="#f0b115"/><path d="M0.5 4.2H15.5V11.5Q15.5 12.5 14.5 12.5H1.5Q0.5 12.5 0.5 11.5Z" fill="url(#fg)"/><path d="M1 12.1H15" stroke="#e9a614" stroke-width="0.9"/></svg>
<div class="t" style="left:37.7px;top:222.64px;font-size:12px;line-height:14.4px;color:#2a23b3;font-weight:normal;font-style:normal;letter-spacing:-0.342px;">Mobile uploads</div>
<svg style="left:147.5px;top:224.0px" width="11" height="11" viewBox="0 0 11 11"><circle cx="5.5" cy="5.5" r="4.8" fill="none" stroke="#2e8b3e" stroke-width="1.1"/><path d="M2.9 5.5L4.8 7.5L8.3 3.4" stroke="#2e8b3e" stroke-width="1.1" fill="none"/></svg>
<svg style="left:8px;top:244px" width="7" height="9" viewBox="0 0 7 9"><path d="M1.2 1L5 4.5L1.2 8" stroke="#1e2a78" stroke-width="1.9" fill="none"/></svg>
<svg style="left:19px;top:241px" width="16" height="13" viewBox="0 0 16 13"><path d="M0.5 1.5Q0.5 0.5 1.5 0.5H6L8 2.5H14.5Q15.5 2.5 15.5 3.5V11.5Q15.5 12.5 14.5 12.5H1.5Q0.5 12.5 0.5 11.5Z" fill="#f0b115"/><path d="M0.5 4.2H15.5V11.5Q15.5 12.5 14.5 12.5H1.5Q0.5 12.5 0.5 11.5Z" fill="url(#fg)"/><path d="M1 12.1H15" stroke="#e9a614" stroke-width="0.9"/></svg>
<div class="t" style="left:37.7px;top:241.64px;font-size:12px;line-height:14.4px;color:#2a23b3;font-weight:normal;font-style:normal;letter-spacing:-0.336px;">Saved pictures</div>
<svg style="left:148px;top:243px" width="11" height="9" viewBox="0 0 11 9"><path d="M2.6 7.6H7.9A2.1 2.1 0 0 0 8.3 3.4A2.9 2.9 0 0 0 3.1 2.6A2.5 2.5 0 0 0 2.6 7.6Z" fill="none" stroke="#1a6fe0" stroke-width="1.3"/><path d="M3 7.4H7.6" stroke="#7aaee8" stroke-width="1.2"/></svg>
<svg style="left:8px;top:263px" width="7" height="9" viewBox="0 0 7 9"><path d="M1.2 1L5 4.5L1.2 8" stroke="#1e2a78" stroke-width="1.9" fill="none"/></svg>
<svg style="left:19px;top:260px" width="16" height="13" viewBox="0 0 16 13"><path d="M0.5 1.5Q0.5 0.5 1.5 0.5H6L8 2.5H14.5Q15.5 2.5 15.5 3.5V11.5Q15.5 12.5 14.5 12.5H1.5Q0.5 12.5 0.5 11.5Z" fill="#f0b115"/><path d="M0.5 4.2H15.5V11.5Q15.5 12.5 14.5 12.5H1.5Q0.5 12.5 0.5 11.5Z" fill="url(#fg)"/><path d="M1 12.1H15" stroke="#e9a614" stroke-width="0.9"/></svg>
<div class="t" style="left:37.7px;top:260.64px;font-size:12px;line-height:14.4px;color:#2a23b3;font-weight:normal;font-style:normal;letter-spacing:-0.367px;">Screenshots</div>
<svg style="left:147.5px;top:262.0px" width="11" height="11" viewBox="0 0 11 11"><circle cx="5.5" cy="5.5" r="4.8" fill="none" stroke="#2e8b3e" stroke-width="1.1"/><path d="M2.9 5.5L4.8 7.5L8.3 3.4" stroke="#2e8b3e" stroke-width="1.1" fill="none"/></svg>
<svg style="left:8px;top:282px" width="7" height="9" viewBox="0 0 7 9"><path d="M1.2 1L5 4.5L1.2 8" stroke="#1e2a78" stroke-width="1.9" fill="none"/></svg>
<svg style="left:19px;top:279px" width="16" height="13" viewBox="0 0 16 13"><path d="M0.5 1.5Q0.5 0.5 1.5 0.5H6L8 2.5H14.5Q15.5 2.5 15.5 3.5V11.5Q15.5 12.5 14.5 12.5H1.5Q0.5 12.5 0.5 11.5Z" fill="#f0b115"/><path d="M0.5 4.2H15.5V11.5Q15.5 12.5 14.5 12.5H1.5Q0.5 12.5 0.5 11.5Z" fill="url(#fg)"/><path d="M1 12.1H15" stroke="#e9a614" stroke-width="0.9"/></svg>
<div class="t" style="left:37.7px;top:279.64px;font-size:12px;line-height:14.4px;color:#2a23b3;font-weight:normal;font-style:normal;letter-spacing:-0.367px;">Screenshots</div>
<svg style="left:147.5px;top:281.0px" width="11" height="11" viewBox="0 0 11 11"><circle cx="5.5" cy="5.5" r="4.8" fill="none" stroke="#2e8b3e" stroke-width="1.1"/><path d="M2.9 5.5L4.8 7.5L8.3 3.4" stroke="#2e8b3e" stroke-width="1.1" fill="none"/></svg>
<svg style="left:21px;top:297px" width="13" height="16" viewBox="0 0 13 16"><path d="M0.5 0.5H8.5L12.5 4.5V15.5H0.5Z" fill="#fff" stroke="#7a7a7a" stroke-width="1"/><path d="M8.5 0.5V4.5H12.5" fill="none" stroke="#7a7a7a"/><rect x="3" y="5" width="6.5" height="6.5" fill="#1f6fd8"/><path d="M3 11.5L6.5 7.5L9.5 11.5Z" fill="#36b4f0"/><rect x="7.2" y="6" width="1.4" height="1.4" fill="#fff"/></svg>
<div class="t" style="left:37.6px;top:298.64px;font-size:12px;line-height:14.4px;color:#111;font-weight:normal;font-style:normal;letter-spacing:-0.205px;">Argentina_0002.jpg</div>
<svg style="left:147.5px;top:300.0px" width="11" height="11" viewBox="0 0 11 11"><circle cx="5.5" cy="5.5" r="4.8" fill="none" stroke="#2e8b3e" stroke-width="1.1"/><path d="M2.9 5.5L4.8 7.5L8.3 3.4" stroke="#2e8b3e" stroke-width="1.1" fill="none"/></svg>
<svg style="left:21px;top:316px" width="13" height="16" viewBox="0 0 13 16"><path d="M0.5 0.5H8.5L12.5 4.5V15.5H0.5Z" fill="#fff" stroke="#7a7a7a" stroke-width="1"/><path d="M8.5 0.5V4.5H12.5" fill="none" stroke="#7a7a7a"/><rect x="3" y="5" width="6.5" height="6.5" fill="#1f6fd8"/><path d="M3 11.5L6.5 7.5L9.5 11.5Z" fill="#36b4f0"/><rect x="7.2" y="6" width="1.4" height="1.4" fill="#fff"/></svg>
<div class="t" style="left:37.6px;top:317.64px;font-size:12px;line-height:14.4px;color:#111;font-weight:normal;font-style:normal;letter-spacing:-0.205px;">Argentina_0003.jpg</div>
<svg style="left:147.5px;top:319.0px" width="11" height="11" viewBox="0 0 11 11"><circle cx="5.5" cy="5.5" r="4.8" fill="none" stroke="#2e8b3e" stroke-width="1.1"/><path d="M2.9 5.5L4.8 7.5L8.3 3.4" stroke="#2e8b3e" stroke-width="1.1" fill="none"/></svg>
<svg style="left:21px;top:335px" width="13" height="16" viewBox="0 0 13 16"><path d="M0.5 0.5H8.5L12.5 4.5V15.5H0.5Z" fill="#fff" stroke="#7a7a7a" stroke-width="1"/><path d="M8.5 0.5V4.5H12.5" fill="none" stroke="#7a7a7a"/><rect x="3" y="5" width="6.5" height="6.5" fill="#1f6fd8"/><path d="M3 11.5L6.5 7.5L9.5 11.5Z" fill="#36b4f0"/><rect x="7.2" y="6" width="1.4" height="1.4" fill="#fff"/></svg>
<div class="t" style="left:37.6px;top:336.64px;font-size:12px;line-height:14.4px;color:#111;font-weight:normal;font-style:normal;letter-spacing:-0.205px;">Argentina_0004.jpg</div>
<svg style="left:147.5px;top:338.0px" width="11" height="11" viewBox="0 0 11 11"><circle cx="5.5" cy="5.5" r="4.8" fill="none" stroke="#2e8b3e" stroke-width="1.1"/><path d="M2.9 5.5L4.8 7.5L8.3 3.4" stroke="#2e8b3e" stroke-width="1.1" fill="none"/></svg>
<svg style="left:21px;top:354px" width="13" height="16" viewBox="0 0 13 16"><path d="M0.5 0.5H8.5L12.5 4.5V15.5H0.5Z" fill="#fff" stroke="#7a7a7a" stroke-width="1"/><path d="M8.5 0.5V4.5H12.5" fill="none" stroke="#7a7a7a"/><rect x="3" y="5" width="6.5" height="6.5" fill="#1f6fd8"/><path d="M3 11.5L6.5 7.5L9.5 11.5Z" fill="#36b4f0"/><rect x="7.2" y="6" width="1.4" height="1.4" fill="#fff"/></svg>
<div class="t" style="left:37.6px;top:355.64px;font-size:12px;line-height:14.4px;color:#111;font-weight:normal;font-style:normal;letter-spacing:-0.205px;">Argentina_0005.jpg</div>
<svg style="left:147.5px;top:357.0px" width="11" height="11" viewBox="0 0 11 11"><circle cx="5.5" cy="5.5" r="4.8" fill="none" stroke="#2e8b3e" stroke-width="1.1"/><path d="M2.9 5.5L4.8 7.5L8.3 3.4" stroke="#2e8b3e" stroke-width="1.1" fill="none"/></svg>
<svg style="left:21px;top:373px" width="13" height="16" viewBox="0 0 13 16"><path d="M0.5 0.5H8.5L12.5 4.5V15.5H0.5Z" fill="#fff" stroke="#7a7a7a" stroke-width="1"/><path d="M8.5 0.5V4.5H12.5" fill="none" stroke="#7a7a7a"/><rect x="3" y="5" width="6.5" height="6.5" fill="#1f6fd8"/><path d="M3 11.5L6.5 7.5L9.5 11.5Z" fill="#36b4f0"/><rect x="7.2" y="6" width="1.4" height="1.4" fill="#fff"/></svg>
<div class="t" style="left:37.6px;top:374.64px;font-size:12px;line-height:14.4px;color:#111;font-weight:normal;font-style:normal;letter-spacing:-0.205px;">Argentina_0006.jpg</div>
<svg style="left:147.5px;top:376.0px" width="11" height="11" viewBox="0 0 11 11"><circle cx="5.5" cy="5.5" r="4.8" fill="none" stroke="#2e8b3e" stroke-width="1.1"/><path d="M2.9 5.5L4.8 7.5L8.3 3.4" stroke="#2e8b3e" stroke-width="1.1" fill="none"/></svg>
<svg style="left:21px;top:392px" width="13" height="16" viewBox="0 0 13 16"><path d="M0.5 0.5H8.5L12.5 4.5V15.5H0.5Z" fill="#fff" stroke="#7a7a7a" stroke-width="1"/><path d="M8.5 0.5V4.5H12.5" fill="none" stroke="#7a7a7a"/><rect x="3" y="5" width="6.5" height="6.5" fill="#1f6fd8"/><path d="M3 11.5L6.5 7.5L9.5 11.5Z" fill="#36b4f0"/><rect x="7.2" y="6" width="1.4" height="1.4" fill="#fff"/></svg>
<div class="t" style="left:37.6px;top:393.64px;font-size:12px;line-height:14.4px;color:#111;font-weight:normal;font-style:normal;letter-spacing:-0.205px;">Argentina_0007.jpg</div>
<svg style="left:147.5px;top:395.0px" width="11" height="11" viewBox="0 0 11 11"><circle cx="5.5" cy="5.5" r="4.8" fill="none" stroke="#2e8b3e" stroke-width="1.1"/><path d="M2.9 5.5L4.8 7.5L8.3 3.4" stroke="#2e8b3e" stroke-width="1.1" fill="none"/></svg>
<svg style="left:21px;top:411px" width="13" height="16" viewBox="0 0 13 16"><path d="M0.5 0.5H8.5L12.5 4.5V15.5H0.5Z" fill="#fff" stroke="#7a7a7a" stroke-width="1"/><path d="M8.5 0.5V4.5H12.5" fill="none" stroke="#7a7a7a"/><rect x="3" y="5" width="6.5" height="6.5" fill="#1f6fd8"/><path d="M3 11.5L6.5 7.5L9.5 11.5Z" fill="#36b4f0"/><rect x="7.2" y="6" width="1.4" height="1.4" fill="#fff"/></svg>
<div class="t" style="left:37.6px;top:412.64px;font-size:12px;line-height:14.4px;color:#111;font-weight:normal;font-style:normal;letter-spacing:-0.205px;">Argentina_0008.jpg</div>
<svg style="left:147.5px;top:414.0px" width="11" height="11" viewBox="0 0 11 11"><circle cx="5.5" cy="5.5" r="4.8" fill="none" stroke="#2e8b3e" stroke-width="1.1"/><path d="M2.9 5.5L4.8 7.5L8.3 3.4" stroke="#2e8b3e" stroke-width="1.1" fill="none"/></svg>
<svg style="left:21px;top:430px" width="13" height="16" viewBox="0 0 13 16"><path d="M0.5 0.5H8.5L12.5 4.5V15.5H0.5Z" fill="#fff" stroke="#7a7a7a" stroke-width="1"/><path d="M8.5 0.5V4.5H12.5" fill="none" stroke="#7a7a7a"/><rect x="3" y="5" width="6.5" height="6.5" fill="#1f6fd8"/><path d="M3 11.5L6.5 7.5L9.5 11.5Z" fill="#36b4f0"/><rect x="7.2" y="6" width="1.4" height="1.4" fill="#fff"/></svg>
<div class="t" style="left:37.6px;top:431.64px;font-size:12px;line-height:14.4px;color:#111;font-weight:normal;font-style:normal;letter-spacing:-0.205px;">Argentina_0009.jpg</div>
<svg style="left:147.5px;top:433.0px" width="11" height="11" viewBox="0 0 11 11"><circle cx="5.5" cy="5.5" r="4.8" fill="none" stroke="#2e8b3e" stroke-width="1.1"/><path d="M2.9 5.5L4.8 7.5L8.3 3.4" stroke="#2e8b3e" stroke-width="1.1" fill="none"/></svg>
<svg style="left:21px;top:449px" width="13" height="16" viewBox="0 0 13 16"><path d="M0.5 0.5H8.5L12.5 4.5V15.5H0.5Z" fill="#fff" stroke="#7a7a7a" stroke-width="1"/><path d="M8.5 0.5V4.5H12.5" fill="none" stroke="#7a7a7a"/><rect x="3" y="5" width="6.5" height="6.5" fill="#1f6fd8"/><path d="M3 11.5L6.5 7.5L9.5 11.5Z" fill="#36b4f0"/><rect x="7.2" y="6" width="1.4" height="1.4" fill="#fff"/></svg>
<div class="t" style="left:37.6px;top:450.64px;font-size:12px;line-height:14.4px;color:#111;font-weight:normal;font-style:normal;letter-spacing:-0.205px;">Argentina_0010.jpg</div>
<svg style="left:147.5px;top:452.0px" width="11" height="11" viewBox="0 0 11 11"><circle cx="5.5" cy="5.5" r="4.8" fill="none" stroke="#2e8b3e" stroke-width="1.1"/><path d="M2.9 5.5L4.8 7.5L8.3 3.4" stroke="#2e8b3e" stroke-width="1.1" fill="none"/></svg>
<svg style="left:21px;top:468px" width="13" height="16" viewBox="0 0 13 16"><path d="M0.5 0.5H8.5L12.5 4.5V15.5H0.5Z" fill="#fff" stroke="#7a7a7a" stroke-width="1"/><path d="M8.5 0.5V4.5H12.5" fill="none" stroke="#7a7a7a"/><rect x="3" y="5" width="6.5" height="6.5" fill="#1f6fd8"/><path d="M3 11.5L6.5 7.5L9.5 11.5Z" fill="#36b4f0"/><rect x="7.2" y="6" width="1.4" height="1.4" fill="#fff"/></svg>
<div class="t" style="left:37.6px;top:469.64px;font-size:12px;line-height:14.4px;color:#111;font-weight:normal;font-style:normal;letter-spacing:-0.153px;">Argentina_0011.jpg</div>
<svg style="left:147.5px;top:471.0px" width="11" height="11" viewBox="0 0 11 11"><circle cx="5.5" cy="5.5" r="4.8" fill="none" stroke="#2e8b3e" stroke-width="1.1"/><path d="M2.9 5.5L4.8 7.5L8.3 3.4" stroke="#2e8b3e" stroke-width="1.1" fill="none"/></svg>
<svg style="left:21px;top:487px" width="13" height="16" viewBox="0 0 13 16"><path d="M0.5 0.5H8.5L12.5 4.5V15.5H0.5Z" fill="#fff" stroke="#7a7a7a" stroke-width="1"/><path d="M8.5 0.5V4.5H12.5" fill="none" stroke="#7a7a7a"/><rect x="3" y="5" width="6.5" height="6.5" fill="#1f6fd8"/><path d="M3 11.5L6.5 7.5L9.5 11.5Z" fill="#36b4f0"/><rect x="7.2" y="6" width="1.4" height="1.4" fill="#fff"/></svg>
<div class="t" style="left:37.6px;top:488.64px;font-size:12px;line-height:14.4px;color:#111;font-weight:normal;font-style:normal;letter-spacing:-0.205px;">Argentina_0012.jpg</div>
<svg style="left:147.5px;top:490.0px" width="11" height="11" viewBox="0 0 11 11"><circle cx="5.5" cy="5.5" r="4.8" fill="none" stroke="#2e8b3e" stroke-width="1.1"/><path d="M2.9 5.5L4.8 7.5L8.3 3.4" stroke="#2e8b3e" stroke-width="1.1" fill="none"/></svg>
<svg style="left:21px;top:506px" width="13" height="16" viewBox="0 0 13 16"><path d="M0.5 0.5H8.5L12.5 4.5V15.5H0.5Z" fill="#fff" stroke="#7a7a7a" stroke-width="1"/><path d="M8.5 0.5V4.5H12.5" fill="none" stroke="#7a7a7a"/><rect x="3" y="5" width="6.5" height="6.5" fill="#1f6fd8"/><path d="M3 11.5L6.5 7.5L9.5 11.5Z" fill="#36b4f0"/><rect x="7.2" y="6" width="1.4" height="1.4" fill="#fff"/></svg>
<div class="t" style="left:37.6px;top:507.64px;font-size:12px;line-height:14.4px;color:#111;font-weight:normal;font-style:normal;letter-spacing:-0.205px;">Argentina_0013.jpg</div>
<svg style="left:147.5px;top:509.0px" width="11" height="11" viewBox="0 0 11 11"><circle cx="5.5" cy="5.5" r="4.8" fill="none" stroke="#2e8b3e" stroke-width="1.1"/><path d="M2.9 5.5L4.8 7.5L8.3 3.4" stroke="#2e8b3e" stroke-width="1.1" fill="none"/></svg>
<svg style="left:21px;top:525px" width="13" height="16" viewBox="0 0 13 16"><path d="M0.5 0.5H8.5L12.5 4.5V15.5H0.5Z" fill="#fff" stroke="#7a7a7a" stroke-width="1"/><path d="M8.5 0.5V4.5H12.5" fill="none" stroke="#7a7a7a"/><rect x="3" y="5" width="6.5" height="6.5" fill="#1f6fd8"/><path d="M3 11.5L6.5 7.5L9.5 11.5Z" fill="#36b4f0"/><rect x="7.2" y="6" width="1.4" height="1.4" fill="#fff"/></svg>
<div class="t" style="left:37.6px;top:526.64px;font-size:12px;line-height:14.4px;color:#111;font-weight:normal;font-style:normal;letter-spacing:-0.205px;">Argentina_0014.jpg</div>
<svg style="left:147.5px;top:528.0px" width="11" height="11" viewBox="0 0 11 11"><circle cx="5.5" cy="5.5" r="4.8" fill="none" stroke="#2e8b3e" stroke-width="1.1"/><path d="M2.9 5.5L4.8 7.5L8.3 3.4" stroke="#2e8b3e" stroke-width="1.1" fill="none"/></svg>
<svg style="left:21px;top:544px" width="13" height="16" viewBox="0 0 13 16"><path d="M0.5 0.5H8.5L12.5 4.5V15.5H0.5Z" fill="#fff" stroke="#7a7a7a" stroke-width="1"/><path d="M8.5 0.5V4.5H12.5" fill="none" stroke="#7a7a7a"/><rect x="3" y="5" width="6.5" height="6.5" fill="#1f6fd8"/><path d="M3 11.5L6.5 7.5L9.5 11.5Z" fill="#36b4f0"/><rect x="7.2" y="6" width="1.4" height="1.4" fill="#fff"/></svg>
<div class="t" style="left:37.6px;top:545.64px;font-size:12px;line-height:14.4px;color:#111;font-weight:normal;font-style:normal;letter-spacing:-0.205px;">Argentina_0016.jpg</div>
<svg style="left:147.5px;top:547.0px" width="11" height="11" viewBox="0 0 11 11"><circle cx="5.5" cy="5.5" r="4.8" fill="none" stroke="#2e8b3e" stroke-width="1.1"/><path d="M2.9 5.5L4.8 7.5L8.3 3.4" stroke="#2e8b3e" stroke-width="1.1" fill="none"/></svg>
<svg style="left:21px;top:563px" width="13" height="16" viewBox="0 0 13 16"><path d="M0.5 0.5H8.5L12.5 4.5V15.5H0.5Z" fill="#fff" stroke="#7a7a7a" stroke-width="1"/><path d="M8.5 0.5V4.5H12.5" fill="none" stroke="#7a7a7a"/><rect x="3" y="5" width="6.5" height="6.5" fill="#1f6fd8"/><path d="M3 11.5L6.5 7.5L9.5 11.5Z" fill="#36b4f0"/><rect x="7.2" y="6" width="1.4" height="1.4" fill="#fff"/></svg>
<div class="t" style="left:37.6px;top:564.64px;font-size:12px;line-height:14.4px;color:#111;font-weight:normal;font-style:normal;letter-spacing:-0.205px;">Argentina_0017.jpg</div>
<svg style="left:147.5px;top:566.0px" width="11" height="11" viewBox="0 0 11 11"><circle cx="5.5" cy="5.5" r="4.8" fill="none" stroke="#2e8b3e" stroke-width="1.1"/><path d="M2.9 5.5L4.8 7.5L8.3 3.4" stroke="#2e8b3e" stroke-width="1.1" fill="none"/></svg>
<svg style="left:21px;top:582px" width="13" height="16" viewBox="0 0 13 16"><path d="M0.5 0.5H8.5L12.5 4.5V15.5H0.5Z" fill="#fff" stroke="#7a7a7a" stroke-width="1"/><path d="M8.5 0.5V4.5H12.5" fill="none" stroke="#7a7a7a"/><rect x="3" y="5" width="6.5" height="6.5" fill="#1f6fd8"/><path d="M3 11.5L6.5 7.5L9.5 11.5Z" fill="#36b4f0"/><rect x="7.2" y="6" width="1.4" height="1.4" fill="#fff"/></svg>
<div class="t" style="left:37.6px;top:583.64px;font-size:12px;line-height:14.4px;color:#111;font-weight:normal;font-style:normal;letter-spacing:-0.205px;">Argentina_0018.jpg</div>
<svg style="left:147.5px;top:585.0px" width="11" height="11" viewBox="0 0 11 11"><circle cx="5.5" cy="5.5" r="4.8" fill="none" stroke="#2e8b3e" stroke-width="1.1"/><path d="M2.9 5.5L4.8 7.5L8.3 3.4" stroke="#2e8b3e" stroke-width="1.1" fill="none"/></svg>
<svg style="left:21px;top:601px" width="13" height="16" viewBox="0 0 13 16"><path d="M0.5 0.5H8.5L12.5 4.5V15.5H0.5Z" fill="#fff" stroke="#7a7a7a" stroke-width="1"/><path d="M8.5 0.5V4.5H12.5" fill="none" stroke="#7a7a7a"/><rect x="3" y="5" width="6.5" height="6.5" fill="#1f6fd8"/><path d="M3 11.5L6.5 7.5L9.5 11.5Z" fill="#36b4f0"/><rect x="7.2" y="6" width="1.4" height="1.4" fill="#fff"/></svg>
<div class="t" style="left:37.6px;top:602.64px;font-size:12px;line-height:14.4px;color:#111;font-weight:normal;font-style:normal;letter-spacing:-0.205px;">Argentina_0019.jpg</div>
<svg style="left:147.5px;top:604.0px" width="11" height="11" viewBox="0 0 11 11"><circle cx="5.5" cy="5.5" r="4.8" fill="none" stroke="#2e8b3e" stroke-width="1.1"/><path d="M2.9 5.5L4.8 7.5L8.3 3.4" stroke="#2e8b3e" stroke-width="1.1" fill="none"/></svg>
<svg style="left:21px;top:620px" width="13" height="16" viewBox="0 0 13 16"><path d="M0.5 0.5H8.5L12.5 4.5V15.5H0.5Z" fill="#fff" stroke="#7a7a7a" stroke-width="1"/><path d="M8.5 0.5V4.5H12.5" fill="none" stroke="#7a7a7a"/><rect x="3" y="5" width="6.5" height="6.5" fill="#1f6fd8"/><path d="M3 11.5L6.5 7.5L9.5 11.5Z" fill="#36b4f0"/><rect x="7.2" y="6" width="1.4" height="1.4" fill="#fff"/></svg>
<div class="t" style="left:37.6px;top:621.64px;font-size:12px;line-height:14.4px;color:#111;font-weight:normal;font-style:normal;letter-spacing:-0.205px;">Argentina_0020.jpg</div>
<svg style="left:147.5px;top:623.0px" width="11" height="11" viewBox="0 0 11 11"><circle cx="5.5" cy="5.5" r="4.8" fill="none" stroke="#2e8b3e" stroke-width="1.1"/><path d="M2.9 5.5L4.8 7.5L8.3 3.4" stroke="#2e8b3e" stroke-width="1.1" fill="none"/></svg>
<svg style="left:21px;top:639px" width="13" height="16" viewBox="0 0 13 16"><path d="M0.5 0.5H8.5L12.5 4.5V15.5H0.5Z" fill="#fff" stroke="#7a7a7a" stroke-width="1"/><path d="M8.5 0.5V4.5H12.5" fill="none" stroke="#7a7a7a"/><rect x="3" y="5" width="6.5" height="6.5" fill="#1f6fd8"/><path d="M3 11.5L6.5 7.5L9.5 11.5Z" fill="#36b4f0"/><rect x="7.2" y="6" width="1.4" height="1.4" fill="#fff"/></svg>
<div class="t" style="left:37.6px;top:640.64px;font-size:12px;line-height:14.4px;color:#111;font-weight:normal;font-style:normal;letter-spacing:-0.205px;">Argentina_0021.jpg</div>
<svg style="left:147.5px;top:642.0px" width="11" height="11" viewBox="0 0 11 11"><circle cx="5.5" cy="5.5" r="4.8" fill="none" stroke="#2e8b3e" stroke-width="1.1"/><path d="M2.9 5.5L4.8 7.5L8.3 3.4" stroke="#2e8b3e" stroke-width="1.1" fill="none"/></svg>
<svg style="left:21px;top:658px" width="13" height="16" viewBox="0 0 13 16"><path d="M0.5 0.5H8.5L12.5 4.5V15.5H0.5Z" fill="#fff" stroke="#7a7a7a" stroke-width="1"/><path d="M8.5 0.5V4.5H12.5" fill="none" stroke="#7a7a7a"/><rect x="3" y="5" width="6.5" height="6.5" fill="#1f6fd8"/><path d="M3 11.5L6.5 7.5L9.5 11.5Z" fill="#36b4f0"/><rect x="7.2" y="6" width="1.4" height="1.4" fill="#fff"/></svg>
<div class="t" style="left:37.6px;top:659.64px;font-size:12px;line-height:14.4px;color:#111;font-weight:normal;font-style:normal;letter-spacing:-0.205px;">Argentina_0022.jpg</div>
<svg style="left:147.5px;top:661.0px" width="11" height="11" viewBox="0 0 11 11"><circle cx="5.5" cy="5.5" r="4.8" fill="none" stroke="#2e8b3e" stroke-width="1.1"/><path d="M2.9 5.5L4.8 7.5L8.3 3.4" stroke="#2e8b3e" stroke-width="1.1" fill="none"/></svg>
<svg style="left:21px;top:677px" width="13" height="16" viewBox="0 0 13 16"><path d="M0.5 0.5H8.5L12.5 4.5V15.5H0.5Z" fill="#fff" stroke="#7a7a7a" stroke-width="1"/><path d="M8.5 0.5V4.5H12.5" fill="none" stroke="#7a7a7a"/><rect x="3" y="5" width="6.5" height="6.5" fill="#1f6fd8"/><path d="M3 11.5L6.5 7.5L9.5 11.5Z" fill="#36b4f0"/><rect x="7.2" y="6" width="1.4" height="1.4" fill="#fff"/></svg>
<div class="t" style="left:37.6px;top:678.64px;font-size:12px;line-height:14.4px;color:#111;font-weight:normal;font-style:normal;letter-spacing:-0.205px;">Argentina_0023.jpg</div>
<svg style="left:147.5px;top:680.0px" width="11" height="11" viewBox="0 0 11 11"><circle cx="5.5" cy="5.5" r="4.8" fill="none" stroke="#2e8b3e" stroke-width="1.1"/><path d="M2.9 5.5L4.8 7.5L8.3 3.4" stroke="#2e8b3e" stroke-width="1.1" fill="none"/></svg>
<svg style="left:21px;top:696px" width="13" height="16" viewBox="0 0 13 16"><path d="M0.5 0.5H8.5L12.5 4.5V15.5H0.5Z" fill="#fff" stroke="#7a7a7a" stroke-width="1"/><path d="M8.5 0.5V4.5H12.5" fill="none" stroke="#7a7a7a"/><rect x="3" y="5" width="6.5" height="6.5" fill="#1f6fd8"/><path d="M3 11.5L6.5 7.5L9.5 11.5Z" fill="#36b4f0"/><rect x="7.2" y="6" width="1.4" height="1.4" fill="#fff"/></svg>
<div class="t" style="left:37.6px;top:697.64px;font-size:12px;line-height:14.4px;color:#111;font-weight:normal;font-style:normal;letter-spacing:-0.205px;">Argentina_0024.jpg</div>
<svg style="left:147.5px;top:699.0px" width="11" height="11" viewBox="0 0 11 11"><circle cx="5.5" cy="5.5" r="4.8" fill="none" stroke="#2e8b3e" stroke-width="1.1"/><path d="M2.9 5.5L4.8 7.5L8.3 3.4" stroke="#2e8b3e" stroke-width="1.1" fill="none"/></svg>
<svg style="left:21px;top:715px" width="13" height="16" viewBox="0 0 13 16"><path d="M0.5 0.5H8.5L12.5 4.5V15.5H0.5Z" fill="#fff" stroke="#7a7a7a" stroke-width="1"/><path d="M8.5 0.5V4.5H12.5" fill="none" stroke="#7a7a7a"/><rect x="3" y="5" width="6.5" height="6.5" fill="#1f6fd8"/><path d="M3 11.5L6.5 7.5L9.5 11.5Z" fill="#36b4f0"/><rect x="7.2" y="6" width="1.4" height="1.4" fill="#fff"/></svg>
<div class="t" style="left:37.6px;top:716.64px;font-size:12px;line-height:14.4px;color:#111;font-weight:normal;font-style:normal;letter-spacing:-0.435px;">IMG_2101.jpg</div>
<svg style="left:147.5px;top:718.0px" width="11" height="11" viewBox="0 0 11 11"><circle cx="5.5" cy="5.5" r="5.2" fill="#1ea51e"/><path d="M2.8 5.6L4.8 7.6L8.4 3.2" stroke="#fff" stroke-width="1.3" fill="none"/></svg>
<svg style="left:186px;top:183px" width="13" height="16" viewBox="0 0 13 16"><path d="M0.5 0.5H8.5L12.5 4.5V15.5H0.5Z" fill="#fff" stroke="#7a7a7a" stroke-width="1"/><path d="M8.5 0.5V4.5H12.5" fill="none" stroke="#7a7a7a"/><rect x="3" y="5" width="6.5" height="6.5" fill="#1f6fd8"/><path d="M3 11.5L6.5 7.5L9.5 11.5Z" fill="#36b4f0"/><rect x="7.2" y="6" width="1.4" height="1.4" fill="#fff"/></svg>
<div class="t" style="left:202.6px;top:184.64px;font-size:12px;line-height:14.4px;color:#111;font-weight:normal;font-style:normal;letter-spacing:-0.472px;">IMG_2101.png</div>
<svg style="left:312.5px;top:186.0px" width="11" height="11" viewBox="0 0 11 11"><circle cx="5.5" cy="5.5" r="4.8" fill="none" stroke="#2e8b3e" stroke-width="1.1"/><path d="M2.9 5.5L4.8 7.5L8.3 3.4" stroke="#2e8b3e" stroke-width="1.1" fill="none"/></svg>
<svg style="left:186px;top:202px" width="13" height="16" viewBox="0 0 13 16"><path d="M0.5 0.5H8.5L12.5 4.5V15.5H0.5Z" fill="#fff" stroke="#7a7a7a" stroke-width="1"/><path d="M8.5 0.5V4.5H12.5" fill="none" stroke="#7a7a7a"/><rect x="3" y="5" width="6.5" height="6.5" fill="#1f6fd8"/><path d="M3 11.5L6.5 7.5L9.5 11.5Z" fill="#36b4f0"/><rect x="7.2" y="6" width="1.4" height="1.4" fill="#fff"/></svg>
<div class="t" style="left:202.6px;top:203.64px;font-size:12px;line-height:14.4px;color:#111;font-weight:normal;font-style:normal;letter-spacing:-0.435px;">IMG_2103.jpg</div>
<svg style="left:312.5px;top:205.0px" width="11" height="11" viewBox="0 0 11 11"><circle cx="5.5" cy="5.5" r="5.2" fill="#1ea51e"/><path d="M2.8 5.6L4.8 7.6L8.4 3.2" stroke="#fff" stroke-width="1.3" fill="none"/></svg>
<svg style="left:186px;top:221px" width="13" height="16" viewBox="0 0 13 16"><path d="M0.5 0.5H8.5L12.5 4.5V15.5H0.5Z" fill="#fff" stroke="#7a7a7a" stroke-width="1"/><path d="M8.5 0.5V4.5H12.5" fill="none" stroke="#7a7a7a"/><rect x="3" y="5" width="6.5" height="6.5" fill="#1f6fd8"/><path d="M3 11.5L6.5 7.5L9.5 11.5Z" fill="#36b4f0"/><rect x="7.2" y="6" width="1.4" height="1.4" fill="#fff"/></svg>
<div class="t" style="left:202.6px;top:222.64px;font-size:12px;line-height:14.4px;color:#111;font-weight:normal;font-style:normal;letter-spacing:-0.435px;">IMG_2135.jpg</div>
<svg style="left:312.5px;top:224.0px" width="11" height="11" viewBox="0 0 11 11"><circle cx="5.5" cy="5.5" r="4.8" fill="none" stroke="#2e8b3e" stroke-width="1.1"/><path d="M2.9 5.5L4.8 7.5L8.3 3.4" stroke="#2e8b3e" stroke-width="1.1" fill="none"/></svg>
<svg style="left:186px;top:240px" width="13" height="16" viewBox="0 0 13 16"><path d="M0.5 0.5H8.5L12.5 4.5V15.5H0.5Z" fill="#fff" stroke="#7a7a7a" stroke-width="1"/><path d="M8.5 0.5V4.5H12.5" fill="none" stroke="#7a7a7a"/><rect x="3" y="5" width="6.5" height="6.5" fill="#1f6fd8"/><path d="M3 11.5L6.5 7.5L9.5 11.5Z" fill="#36b4f0"/><rect x="7.2" y="6" width="1.4" height="1.4" fill="#fff"/></svg>
<div class="t" style="left:202.6px;top:241.64px;font-size:12px;line-height:14.4px;color:#111;font-weight:normal;font-style:normal;letter-spacing:-0.435px;">IMG_2136.jpg</div>
<svg style="left:312.5px;top:243.0px" width="11" height="11" viewBox="0 0 11 11"><circle cx="5.5" cy="5.5" r="4.8" fill="none" stroke="#2e8b3e" stroke-width="1.1"/><path d="M2.9 5.5L4.8 7.5L8.3 3.4" stroke="#2e8b3e" stroke-width="1.1" fill="none"/></svg>
<svg style="left:186px;top:259px" width="13" height="16" viewBox="0 0 13 16"><path d="M0.5 0.5H8.5L12.5 4.5V15.5H0.5Z" fill="#fff" stroke="#7a7a7a" stroke-width="1"/><path d="M8.5 0.5V4.5H12.5" fill="none" stroke="#7a7a7a"/><rect x="3" y="5" width="6.5" height="6.5" fill="#1f6fd8"/><path d="M3 11.5L6.5 7.5L9.5 11.5Z" fill="#36b4f0"/><rect x="7.2" y="6" width="1.4" height="1.4" fill="#fff"/></svg>
<div class="t" style="left:202.6px;top:260.64px;font-size:12px;line-height:14.4px;color:#111;font-weight:normal;font-style:normal;letter-spacing:-0.435px;">IMG_2148.jpg</div>
<svg style="left:312.5px;top:262.0px" width="11" height="11" viewBox="0 0 11 11"><circle cx="5.5" cy="5.5" r="4.8" fill="none" stroke="#2e8b3e" stroke-width="1.1"/><path d="M2.9 5.5L4.8 7.5L8.3 3.4" stroke="#2e8b3e" stroke-width="1.1" fill="none"/></svg>
<svg style="left:528px;top:183px" width="13" height="16" viewBox="0 0 13 16"><path d="M0.5 0.5H8.5L12.5 4.5V15.5H0.5Z" fill="#fff" stroke="#7a7a7a" stroke-width="1"/><path d="M8.5 0.5V4.5H12.5" fill="none" stroke="#7a7a7a"/><rect x="3" y="5" width="6.5" height="6.5" fill="#1f6fd8"/><path d="M3 11.5L6.5 7.5L9.5 11.5Z" fill="#36b4f0"/><rect x="7.2" y="6" width="1.4" height="1.4" fill="#fff"/></svg>
<div class="t" style="left:544px;top:184.64px;font-size:12px;line-height:14.4px;color:#111;font-weight:normal;font-style:normal;letter-spacing:-0.205px;">Argentina_0003.jpg</div>
<svg style="left:528px;top:202px" width="13" height="16" viewBox="0 0 13 16"><path d="M0.5 0.5H8.5L12.5 4.5V15.5H0.5Z" fill="#fff" stroke="#7a7a7a" stroke-width="1"/><path d="M8.5 0.5V4.5H12.5" fill="none" stroke="#7a7a7a"/><rect x="3" y="5" width="6.5" height="6.5" fill="#1f6fd8"/><path d="M3 11.5L6.5 7.5L9.5 11.5Z" fill="#36b4f0"/><rect x="7.2" y="6" width="1.4" height="1.4" fill="#fff"/></svg>
<div class="t" style="left:544px;top:203.64px;font-size:12px;line-height:14.4px;color:#111;font-weight:normal;font-style:normal;letter-spacing:-0.205px;">Argentina_0004.jpg</div>
<svg style="left:528px;top:221px" width="13" height="16" viewBox="0 0 13 16"><path d="M0.5 0.5H8.5L12.5 4.5V15.5H0.5Z" fill="#fff" stroke="#7a7a7a" stroke-width="1"/><path d="M8.5 0.5V4.5H12.5" fill="none" stroke="#7a7a7a"/><rect x="3" y="5" width="6.5" height="6.5" fill="#1f6fd8"/><path d="M3 11.5L6.5 7.5L9.5 11.5Z" fill="#36b4f0"/><rect x="7.2" y="6" width="1.4" height="1.4" fill="#fff"/></svg>
<div class="t" style="left:544px;top:222.64px;font-size:12px;line-height:14.4px;color:#111;font-weight:normal;font-style:normal;letter-spacing:-0.205px;">Argentina_0005.jpg</div>
<svg style="left:528px;top:240px" width="13" height="16" viewBox="0 0 13 16"><path d="M0.5 0.5H8.5L12.5 4.5V15.5H0.5Z" fill="#fff" stroke="#7a7a7a" stroke-width="1"/><path d="M8.5 0.5V4.5H12.5" fill="none" stroke="#7a7a7a"/><rect x="3" y="5" width="6.5" height="6.5" fill="#1f6fd8"/><path d="M3 11.5L6.5 7.5L9.5 11.5Z" fill="#36b4f0"/><rect x="7.2" y="6" width="1.4" height="1.4" fill="#fff"/></svg>
<div class="t" style="left:544px;top:241.64px;font-size:12px;line-height:14.4px;color:#111;font-weight:normal;font-style:normal;letter-spacing:-0.205px;">Argentina_0006.jpg</div>
<svg style="left:528px;top:259px" width="13" height="16" viewBox="0 0 13 16"><path d="M0.5 0.5H8.5L12.5 4.5V15.5H0.5Z" fill="#fff" stroke="#7a7a7a" stroke-width="1"/><path d="M8.5 0.5V4.5H12.5" fill="none" stroke="#7a7a7a"/><rect x="3" y="5" width="6.5" height="6.5" fill="#1f6fd8"/><path d="M3 11.5L6.5 7.5L9.5 11.5Z" fill="#36b4f0"/><rect x="7.2" y="6" width="1.4" height="1.4" fill="#fff"/></svg>
<div class="t" style="left:544px;top:260.64px;font-size:12px;line-height:14.4px;color:#111;font-weight:normal;font-style:normal;letter-spacing:-0.205px;">Argentina_0007.jpg</div>
<div class="ab" style="left:1px;top:741px;width:502px;height:25px;background:#f0f0f0;"></div>
<div class="ab" style="left:508px;top:741px;width:505px;height:25px;background:#f0f0f0;"></div>
<div class="ab" style="left:1px;top:741px;width:502px;height:1px;background:#a9a9a9;"></div>
<div class="ab" style="left:508px;top:741px;width:505px;height:1px;background:#a9a9a9;"></div>
<div class="ab" style="left:68px;top:742px;width:21.5px;height:24px;background:#dcdcdc;border-bottom-right-radius:5px;box-shadow:inset -1px 0 0 #c4c4c4, inset 0 -1px 0 #c4c4c4"></div>
<div class="ab" style="left:1px;top:742px;width:71px;height:24px;background:#ffffff;border-bottom-right-radius:5px;box-shadow:1px 0 1px #b0b0b0"></div>
<svg style="left:75.5px;top:749.5px" width="9" height="9" viewBox="0 0 9 9"><path d="M4.5 0V8.5M0.2 4.2H8.7" stroke="#7b7b7b" stroke-width="2"/></svg>
<svg style="left:5px;top:746px" width="16" height="16" viewBox="0 0 16 16"><rect x="1" y="0" width="14" height="13" rx="1.5" fill="#1a7ad6"/><path d="M1.5 13L8 6.5L14.5 13Z" fill="#e6f2fc"/><rect x="10" y="2.5" width="2.2" height="2.2" fill="#fff"/><rect x="0" y="13.5" width="16" height="2" rx="1" fill="#1e88e5"/></svg>
<div class="t" style="left:23.7px;top:745.64px;font-size:12px;line-height:14.4px;color:#111;font-weight:normal;font-style:normal;letter-spacing:-0.078px;">Pictures</div>
<div class="ab" style="left:593px;top:742px;width:21.5px;height:24px;background:#dcdcdc;border-bottom-right-radius:5px;box-shadow:inset -1px 0 0 #c4c4c4, inset 0 -1px 0 #c4c4c4"></div>
<div class="ab" style="left:508px;top:742px;width:89px;height:24px;background:#ffffff;border-bottom-right-radius:5px;box-shadow:1px 0 1px #b0b0b0"></div>
<svg style="left:600.5px;top:749.5px" width="9" height="9" viewBox="0 0 9 9"><path d="M4.5 0V8.5M0.2 4.2H8.7" stroke="#7b7b7b" stroke-width="2"/></svg>
<svg style="left:512px;top:746px" width="16" height="13" viewBox="0 0 16 13"><path d="M0.5 1.5Q0.5 0.5 1.5 0.5H6L8 2.5H14.5Q15.5 2.5 15.5 3.5V11.5Q15.5 12.5 14.5 12.5H1.5Q0.5 12.5 0.5 11.5Z" fill="#f0b115"/><path d="M0.5 4.2H15.5V11.5Q15.5 12.5 14.5 12.5H1.5Q0.5 12.5 0.5 11.5Z" fill="url(#fg)"/><path d="M1 12.1H15" stroke="#e9a614" stroke-width="0.9"/></svg>
<div class="t" style="left:530.5px;top:745.64px;font-size:12px;line-height:14.4px;color:#111;font-weight:normal;font-style:normal;letter-spacing:-0.117px;">New Folder</div>
<div class="ab" style="left:1px;top:766px;width:1012px;height:23px;background:#f0f0f0;"></div>
<div class="ab" style="left:1px;top:766px;width:1012px;height:1px;background:#dcdcdc;"></div>
<svg style="left:4px;top:771px" width="16" height="13" viewBox="0 0 16 13"><path d="M0.5 1.5Q0.5 0.5 1.5 0.5H6L8 2.5H14.5Q15.5 2.5 15.5 3.5V11.5Q15.5 12.5 14.5 12.5H1.5Q0.5 12.5 0.5 11.5Z" fill="#f0b115"/><path d="M0.5 4.2H15.5V11.5Q15.5 12.5 14.5 12.5H1.5Q0.5 12.5 0.5 11.5Z" fill="url(#fg)"/><path d="M1 12.1H15" stroke="#e9a614" stroke-width="0.9"/></svg>
<div class="t" style="left:23px;top:771.64px;font-size:12px;line-height:14.4px;color:#111;font-weight:normal;font-style:normal;letter-spacing:0.113px;">0 / 6</div>
<div class="ab" style="left:52px;top:769px;width:1px;height:18px;background:#d8d8d8;"></div>
<svg style="left:58px;top:769px" width="12" height="16" viewBox="0 0 12 16"><path d="M0.5 0.5H7.5L11.5 4.5V15.5H0.5Z" fill="#fff" stroke="#555"/><path d="M7.5 0.5V4.5H11.5" fill="none" stroke="#555"/></svg>
<div class="t" style="left:75px;top:771.64px;font-size:12px;line-height:14.4px;color:#111;font-weight:normal;font-style:normal;letter-spacing:-0.045px;">0 / 28</div>
<div class="ab" style="left:116px;top:769px;width:1px;height:18px;background:#d8d8d8;"></div>
<div class="t" style="left:123px;top:771.64px;font-size:12px;line-height:14.4px;color:#111;font-weight:normal;font-style:normal;letter-spacing:-0.948px;">27</div>
<div class="ab" style="left:137px;top:771px;width:27px;height:15px;background:#dcdcdc;border:1px solid #a8a8a8;border-radius:2px"></div>
<div class="t" style="left:141px;top:771.64px;font-size:12px;line-height:14.4px;color:#111;font-weight:normal;font-style:normal;letter-spacing:0.793px;">jpg</div>
<div class="t" style="left:165.5px;top:771.64px;font-size:12px;line-height:14.4px;color:#111;font-weight:normal;font-style:normal;letter-spacing:0.000px;">,</div>
<div class="t" style="left:172px;top:771.64px;font-size:12px;line-height:14.4px;color:#111;font-weight:normal;font-style:normal;letter-spacing:0.000px;">1</div>
<div class="ab" style="left:180px;top:771px;width:31px;height:15px;background:#dcdcdc;border:1px solid #a8a8a8;border-radius:2px"></div>
<div class="t" style="left:184px;top:771.64px;font-size:12px;line-height:14.4px;color:#111;font-weight:normal;font-style:normal;letter-spacing:0.239px;">png</div>
<div class="ab" style="left:219px;top:769px;width:1px;height:18px;background:#d8d8d8;"></div>
<div class="t" style="left:226.9px;top:771.64px;font-size:12px;line-height:14.4px;color:#e81010;font-weight:bold;font-style:normal;letter-spacing:-0.262px;-webkit-text-stroke:0;">1 hidden</div>
<div class="ab" style="left:281px;top:769px;width:1px;height:18px;background:#d8d8d8;"></div>
<div class="t" style="left:287.5px;top:771.64px;font-size:12px;line-height:14.4px;color:#111;font-weight:normal;font-style:normal;letter-spacing:-0.182px;">0 bytes / 136 M</div>
<div class="ab" style="left:374px;top:769px;width:1px;height:18px;background:#d8d8d8;"></div>
<svg style="left:380px;top:770px" width="15" height="15" viewBox="0 0 15 15"><circle cx="7.5" cy="7.5" r="7.5" fill="#2e6fba"/><rect x="6.4" y="6" width="2.2" height="6" fill="#fff"/><circle cx="7.5" cy="3.8" r="1.3" fill="#fff"/></svg>
<div class="ab" style="left:402px;top:769px;width:1px;height:18px;background:#d8d8d8;"></div>
<div class="t" style="left:408.8px;top:771.64px;font-size:12px;line-height:14.4px;color:#111;font-weight:normal;font-style:normal;letter-spacing:-0.671px;">60.9 GB</div>
<div class="ab" style="left:452px;top:772px;width:49px;height:13px;background:#e8e8e8;border:1px solid #9b9b9b"></div>
<div class="ab" style="left:453px;top:773px;width:19px;height:11px;background:#2d9be0;"></div>
<div class="ab" style="left:504px;top:769px;width:1px;height:18px;background:#d8d8d8;"></div>
<svg style="left:508px;top:771px" width="16" height="13" viewBox="0 0 16 13"><path d="M0.5 1.5Q0.5 0.5 1.5 0.5H6L8 2.5H14.5Q15.5 2.5 15.5 3.5V11.5Q15.5 12.5 14.5 12.5H1.5Q0.5 12.5 0.5 11.5Z" fill="#f0b115"/><path d="M0.5 4.2H15.5V11.5Q15.5 12.5 14.5 12.5H1.5Q0.5 12.5 0.5 11.5Z" fill="url(#fg)"/><path d="M1 12.1H15" stroke="#e9a614" stroke-width="0.9"/></svg>
<div class="t" style="left:527px;top:771.64px;font-size:12px;line-height:14.4px;color:#111;font-weight:normal;font-style:normal;letter-spacing:0.263px;">0 / 0</div>
<div class="ab" style="left:556px;top:769px;width:1px;height:18px;background:#d8d8d8;"></div>
<svg style="left:562px;top:769px" width="12" height="16" viewBox="0 0 12 16"><path d="M0.5 0.5H7.5L11.5 4.5V15.5H0.5Z" fill="#fff" stroke="#555"/><path d="M7.5 0.5V4.5H11.5" fill="none" stroke="#555"/></svg>
<div class="t" style="left:579.3px;top:771.64px;font-size:12px;line-height:14.4px;color:#111;font-weight:normal;font-style:normal;letter-spacing:0.038px;">0 / 5</div>
<div class="ab" style="left:609px;top:769px;width:1px;height:18px;background:#d8d8d8;"></div>
<div class="t" style="left:615px;top:771.64px;font-size:12px;line-height:14.4px;color:#111;font-weight:normal;font-style:normal;letter-spacing:0.000px;">5</div>
<div class="ab" style="left:623px;top:771px;width:26px;height:15px;background:#dcdcdc;border:1px solid #a8a8a8;border-radius:2px"></div>
<div class="t" style="left:627px;top:771.64px;font-size:12px;line-height:14.4px;color:#111;font-weight:normal;font-style:normal;letter-spacing:0.793px;">jpg</div>
<div class="ab" style="left:657px;top:769px;width:1px;height:18px;background:#d8d8d8;"></div>
<div class="t" style="left:665px;top:771.64px;font-size:12px;line-height:14.4px;color:#111;font-weight:normal;font-style:normal;letter-spacing:-0.174px;">0 bytes / 24.3 MB</div>
<div class="ab" style="left:882px;top:769px;width:1px;height:18px;background:#d8d8d8;"></div>
<svg style="left:888px;top:770px" width="15" height="15" viewBox="0 0 15 15"><circle cx="7.5" cy="7.5" r="7.5" fill="#2e6fba"/><rect x="6.4" y="6" width="2.2" height="6" fill="#fff"/><circle cx="7.5" cy="3.8" r="1.3" fill="#fff"/></svg>
<div class="ab" style="left:910px;top:769px;width:1px;height:18px;background:#d8d8d8;"></div>
<div class="t" style="left:916.8px;top:771.64px;font-size:12px;line-height:14.4px;color:#111;font-weight:normal;font-style:normal;letter-spacing:-0.721px;">60.9 GB</div>
<div class="ab" style="left:960px;top:772px;width:49px;height:13px;background:#e8e8e8;border:1px solid #9b9b9b"></div>
<div class="ab" style="left:961px;top:773px;width:19px;height:11px;background:#2d9be0;"></div>
<div class="ab" style="left:218px;top:293px;width:461px;height:232px;background:rgba(0,0,0,0.35);border-radius:3px;filter:blur(1px)"></div>
<div class="ab" style="left:216px;top:291px;width:461px;height:232px;background:#f9f9f9;border:1px solid #d9d9d9;border-radius:3px"></div>
<div class="t" style="left:220.3px;top:295.64px;font-size:12px;line-height:14.4px;color:#3a3a3a;font-weight:normal;font-style:normal;letter-spacing:-0.389px;-webkit-text-stroke:0.1px currentColor;">IMG_2148.jpg</div>
<div class="t" style="left:220.3px;top:310.64px;font-size:12px;line-height:14.4px;color:#3a3a3a;font-weight:normal;font-style:normal;letter-spacing:-0.563px;-webkit-text-stroke:0.1px currentColor;">4000 x 2672 x 24 JPEG Image</div>
<div class="t" style="left:220.3px;top:340.64px;font-size:12px;line-height:14.4px;color:#424c57;font-weight:bold;font-style:normal;letter-spacing:-0.302px;-webkit-text-stroke:0;">Size:</div>
<div class="t" style="left:330.8px;top:340.64px;font-size:12px;line-height:14.4px;color:#3a3a3a;font-weight:normal;font-style:normal;letter-spacing:-0.398px;-webkit-text-stroke:0.1px currentColor;">4.87 MB</div>
<div class="t" style="left:220.3px;top:355.64px;font-size:12px;line-height:14.4px;color:#424c57;font-weight:bold;font-style:normal;letter-spacing:-0.421px;-webkit-text-stroke:0;">Dimensions:</div>
<div class="t" style="left:330.8px;top:355.64px;font-size:12px;line-height:14.4px;color:#3a3a3a;font-weight:normal;font-style:normal;letter-spacing:-0.458px;-webkit-text-stroke:0.1px currentColor;">4000 x 2672 x 24</div>
<div class="t" style="left:220.3px;top:370.64px;font-size:12px;line-height:14.4px;color:#424c57;font-weight:bold;font-style:normal;letter-spacing:0.035px;-webkit-text-stroke:0;">Modified:</div>
<div class="t" style="left:330.8px;top:370.64px;font-size:12px;line-height:14.4px;color:#3a3a3a;font-weight:normal;font-style:normal;letter-spacing:-0.251px;-webkit-text-stroke:0.1px currentColor;">1/12/2010 3:07 PM</div>
<div class="t" style="left:220.3px;top:385.64px;font-size:12px;line-height:14.4px;color:#424c57;font-weight:bold;font-style:normal;letter-spacing:-0.033px;-webkit-text-stroke:0;">Date Taken:</div>
<div class="t" style="left:330.8px;top:385.64px;font-size:12px;line-height:14.4px;color:#3a3a3a;font-weight:normal;font-style:normal;letter-spacing:-0.251px;-webkit-text-stroke:0.1px currentColor;">1/12/2010 3:07 PM</div>
<div class="t" style="left:220.3px;top:400.64px;font-size:12px;line-height:14.4px;color:#424c57;font-weight:bold;font-style:normal;letter-spacing:-0.333px;-webkit-text-stroke:0;">Camera Make:</div>
<div class="t" style="left:330.8px;top:400.64px;font-size:12px;line-height:14.4px;color:#3a3a3a;font-weight:normal;font-style:normal;letter-spacing:-0.280px;-webkit-text-stroke:0.1px currentColor;">Panasonic</div>
<div class="t" style="left:220.3px;top:415.64px;font-size:12px;line-height:14.4px;color:#424c57;font-weight:bold;font-style:normal;letter-spacing:-0.323px;-webkit-text-stroke:0;">Camera Model:</div>
<div class="t" style="left:330.8px;top:415.64px;font-size:12px;line-height:14.4px;color:#3a3a3a;font-weight:normal;font-style:normal;letter-spacing:-0.379px;-webkit-text-stroke:0.1px currentColor;">DMC-G1</div>
<div class="t" style="left:220.3px;top:430.64px;font-size:12px;line-height:14.4px;color:#424c57;font-weight:bold;font-style:normal;letter-spacing:-0.304px;-webkit-text-stroke:0;">Aperture:</div>
<div class="t" style="left:448.5px;top:430.64px;font-size:12px;line-height:14.4px;color:#424c57;font-weight:bold;font-style:normal;letter-spacing:-0.058px;-webkit-text-stroke:0;">F-Number:</div>
<div class="t" style="left:548.4px;top:430.64px;font-size:12px;line-height:14.4px;color:#3a3a3a;font-weight:normal;font-style:normal;letter-spacing:-0.286px;-webkit-text-stroke:0.1px currentColor;">F/8.0</div>
<div class="t" style="left:220.3px;top:445.64px;font-size:12px;line-height:14.4px;color:#424c57;font-weight:bold;font-style:normal;letter-spacing:-0.295px;-webkit-text-stroke:0;">Shutter Speed:</div>
<div class="t" style="left:448.5px;top:445.64px;font-size:12px;line-height:14.4px;color:#424c57;font-weight:bold;font-style:normal;letter-spacing:-0.354px;-webkit-text-stroke:0;">Exposure Time:</div>
<div class="t" style="left:548.4px;top:445.64px;font-size:12px;line-height:14.4px;color:#3a3a3a;font-weight:normal;font-style:normal;letter-spacing:-0.405px;-webkit-text-stroke:0.1px currentColor;">1/500 sec</div>
<div class="t" style="left:220.3px;top:460.64px;font-size:12px;line-height:14.4px;color:#424c57;font-weight:bold;font-style:normal;letter-spacing:-0.320px;-webkit-text-stroke:0;">ISO Speed:</div>
<div class="t" style="left:330.8px;top:460.64px;font-size:12px;line-height:14.4px;color:#3a3a3a;font-weight:normal;font-style:normal;letter-spacing:-0.294px;-webkit-text-stroke:0.1px currentColor;">ISO 100</div>
<div class="t" style="left:448.5px;top:460.64px;font-size:12px;line-height:14.4px;color:#424c57;font-weight:bold;font-style:normal;letter-spacing:-0.247px;-webkit-text-stroke:0;">White Balance:</div>
<div class="t" style="left:548.4px;top:460.64px;font-size:12px;line-height:14.4px;color:#3a3a3a;font-weight:normal;font-style:normal;letter-spacing:0.371px;-webkit-text-stroke:0.1px currentColor;">Auto</div>
<div class="t" style="left:220.3px;top:475.64px;font-size:12px;line-height:14.4px;color:#424c57;font-weight:bold;font-style:normal;letter-spacing:-0.302px;-webkit-text-stroke:0;">Exposure Bias:</div>
<div class="t" style="left:330.8px;top:475.64px;font-size:12px;line-height:14.4px;color:#3a3a3a;font-weight:normal;font-style:normal;letter-spacing:-0.258px;-webkit-text-stroke:0.1px currentColor;">0 stops</div>
<div class="t" style="left:448.5px;top:475.64px;font-size:12px;line-height:14.4px;color:#424c57;font-weight:bold;font-style:normal;letter-spacing:-0.439px;-webkit-text-stroke:0;">Focal Length:</div>
<div class="t" style="left:548.4px;top:475.64px;font-size:12px;line-height:14.4px;color:#3a3a3a;font-weight:normal;font-style:normal;letter-spacing:-0.069px;-webkit-text-stroke:0.1px currentColor;">45 mm</div>
<div class="t" style="left:220.3px;top:490.64px;font-size:12px;line-height:14.4px;color:#424c57;font-weight:bold;font-style:normal;letter-spacing:-0.283px;-webkit-text-stroke:0;">Subject Distance:</div>
<div class="t" style="left:448.5px;top:490.64px;font-size:12px;line-height:14.4px;color:#424c57;font-weight:bold;font-style:normal;letter-spacing:0.118px;-webkit-text-stroke:0;">Metering Mode:</div>
<div class="t" style="left:548.4px;top:490.64px;font-size:12px;line-height:14.4px;color:#3a3a3a;font-weight:normal;font-style:normal;letter-spacing:-0.198px;-webkit-text-stroke:0.1px currentColor;">Pattern</div>
<div class="t" style="left:220.3px;top:505.64px;font-size:12px;line-height:14.4px;color:#424c57;font-weight:bold;font-style:normal;letter-spacing:-0.373px;-webkit-text-stroke:0;">Exposure Program:</div>
<div class="t" style="left:330.8px;top:505.64px;font-size:12px;line-height:14.4px;color:#3a3a3a;font-weight:normal;font-style:normal;letter-spacing:-0.175px;-webkit-text-stroke:0.1px currentColor;">Landscape mode</div>
<div class="t" style="left:448.5px;top:505.64px;font-size:12px;line-height:14.4px;color:#424c57;font-weight:bold;font-style:normal;letter-spacing:-1.148px;-webkit-text-stroke:0;">Flash:</div>
<div class="t" style="left:548.4px;top:505.64px;font-size:12px;line-height:14.4px;color:#3a3a3a;font-weight:normal;font-style:normal;letter-spacing:0.121px;-webkit-text-stroke:0.1px currentColor;">Not fired, compulsory</div>
<div class="ab" style="left:543px;top:295px;width:130px;height:87px;border:1px solid #555;overflow:hidden">
<svg style="left:0;top:0" width="128" height="85" viewBox="0 0 128 85"><defs><linearGradient id="sky" x1="0" y1="0" x2="0" y2="1"><stop offset="0" stop-color="#d5e3f1"/><stop offset="0.5" stop-color="#e4eaf1"/><stop offset="1" stop-color="#eceff2"/></linearGradient><linearGradient id="gr" x1="0" y1="0" x2="0" y2="1"><stop offset="0" stop-color="#aeab9e"/><stop offset="0.5" stop-color="#aba898"/><stop offset="1" stop-color="#aaa797"/></linearGradient></defs><rect x="0" y="0" width="128" height="36" fill="url(#sky)"/><ellipse cx="45" cy="18" rx="30" ry="6" fill="#eef1f4" opacity="0.7"/><ellipse cx="85" cy="15" rx="22" ry="4" fill="#f1f3f6" opacity="0.7"/><ellipse cx="118" cy="8" rx="12" ry="4" fill="#f3f4f6" opacity="0.8"/><ellipse cx="95" cy="26" rx="32" ry="5" fill="#eceff3" opacity="0.6"/><path d="M100 35L112 32L116 30L119 32L128 33V36H100Z" fill="#a3b6c4"/><path d="M0 35L10 33.5L25 34.5V36H0Z" fill="#b5c5cf"/><rect x="0" y="35" width="128" height="7" fill="#82b2b8"/><path d="M0 42L60 41.5L110 40L128 38V85H0Z" fill="url(#gr)"/><path d="M118 39L128 37.5V45L121 43Z" fill="#6d6b66"/><ellipse cx="22" cy="70" rx="22" ry="4" fill="#bfbcb2" opacity="0.8"/><ellipse cx="60" cy="80" rx="30" ry="3" fill="#c2bfb5" opacity="0.7"/><ellipse cx="110" cy="64" rx="20" ry="3" fill="#bdb9ae" opacity="0.6"/><ellipse cx="90" cy="76" rx="18" ry="3" fill="#c0bcb2" opacity="0.6"/><ellipse cx="40" cy="52" rx="25" ry="3" fill="#b8b5a9" opacity="0.5"/><ellipse cx="57.9" cy="66.1" rx="1.8" ry="1.1" fill="#6a6858" opacity="0.53"/><ellipse cx="65.5" cy="69.1" rx="1.7" ry="0.7" fill="#8c8d5c" opacity="0.69"/><ellipse cx="114.0" cy="69.3" rx="1.4" ry="0.8" fill="#c6c3b8" opacity="0.74"/><ellipse cx="78.8" cy="48.8" rx="0.4" ry="0.3" fill="#8c8d5c" opacity="0.47"/><ellipse cx="112.6" cy="67.8" rx="1.6" ry="0.9" fill="#6a6858" opacity="0.68"/><ellipse cx="82.0" cy="63.5" rx="1.3" ry="0.8" fill="#7f8557" opacity="0.90"/><ellipse cx="107.5" cy="72.4" rx="1.0" ry="0.5" fill="#5b5a4e" opacity="0.46"/><ellipse cx="72.1" cy="46.6" rx="0.5" ry="0.2" fill="#7f8557" opacity="0.88"/><ellipse cx="108.5" cy="42.0" rx="0.5" ry="0.4" fill="#c6c3b8" opacity="0.62"/><ellipse cx="90.7" cy="60.1" rx="1.1" ry="0.5" fill="#8e8a6a" opacity="0.49"/><ellipse cx="42.6" cy="83.5" rx="2.1" ry="0.9" fill="#6a6858" opacity="0.77"/><ellipse cx="1.4" cy="62.0" rx="1.1" ry="0.7" fill="#6a6858" opacity="0.65"/><ellipse cx="24.4" cy="73.5" rx="0.6" ry="0.4" fill="#7f8557" opacity="0.63"/><ellipse cx="126.7" cy="42.0" rx="0.8" ry="0.7" fill="#5b5a4e" opacity="0.90"/><ellipse cx="2.5" cy="50.1" rx="1.2" ry="0.8" fill="#7f8557" opacity="0.47"/><ellipse cx="18.7" cy="61.0" rx="0.4" ry="0.3" fill="#5b5a4e" opacity="0.62"/><ellipse cx="9.5" cy="51.0" rx="1.0" ry="0.4" fill="#8e8a6a" opacity="0.62"/><ellipse cx="58.0" cy="83.2" rx="1.5" ry="0.9" fill="#a09c68" opacity="0.53"/><ellipse cx="19.7" cy="81.1" rx="2.1" ry="1.1" fill="#6a6858" opacity="0.52"/><ellipse cx="80.5" cy="65.8" rx="1.4" ry="0.8" fill="#7f8557" opacity="0.64"/><ellipse cx="13.3" cy="43.7" rx="0.9" ry="0.5" fill="#a09c68" opacity="0.57"/><ellipse cx="105.4" cy="67.6" rx="0.9" ry="0.4" fill="#7f8557" opacity="0.51"/><ellipse cx="61.4" cy="70.1" rx="1.4" ry="0.6" fill="#8c8d5c" opacity="0.79"/><ellipse cx="8.9" cy="59.7" rx="0.7" ry="0.3" fill="#5b5a4e" opacity="0.62"/><ellipse cx="73.2" cy="47.7" rx="0.7" ry="0.5" fill="#8e8a6a" opacity="0.75"/><ellipse cx="88.5" cy="67.1" rx="0.6" ry="0.3" fill="#96935f" opacity="0.77"/><ellipse cx="123.2" cy="42.9" rx="0.7" ry="0.4" fill="#5b5a4e" opacity="0.59"/><ellipse cx="127.9" cy="45.2" rx="0.7" ry="0.5" fill="#96935f" opacity="0.81"/><ellipse cx="117.1" cy="57.1" rx="1.2" ry="0.9" fill="#a09c68" opacity="0.87"/><ellipse cx="3.9" cy="63.5" rx="0.4" ry="0.3" fill="#a09c68" opacity="0.71"/><ellipse cx="77.9" cy="45.4" rx="0.8" ry="0.6" fill="#a09c68" opacity="0.78"/><ellipse cx="49.7" cy="73.6" rx="1.5" ry="0.8" fill="#7f8557" opacity="0.68"/><ellipse cx="65.9" cy="55.3" rx="0.5" ry="0.2" fill="#7f8557" opacity="0.67"/><ellipse cx="78.7" cy="81.6" rx="1.0" ry="0.4" fill="#5b5a4e" opacity="0.51"/><ellipse cx="78.3" cy="64.3" rx="1.5" ry="0.8" fill="#c6c3b8" opacity="0.85"/><ellipse cx="41.9" cy="70.6" rx="0.7" ry="0.4" fill="#6a6858" opacity="0.85"/><ellipse cx="49.2" cy="67.1" rx="0.9" ry="0.4" fill="#8c8d5c" opacity="0.77"/><ellipse cx="121.6" cy="53.9" rx="0.6" ry="0.3" fill="#5b5a4e" opacity="0.87"/><ellipse cx="106.4" cy="58.4" rx="1.0" ry="0.7" fill="#c6c3b8" opacity="0.59"/><ellipse cx="106.1" cy="54.0" rx="1.0" ry="0.7" fill="#5b5a4e" opacity="0.71"/><ellipse cx="39.6" cy="76.0" rx="0.4" ry="0.2" fill="#8c8d5c" opacity="0.80"/><ellipse cx="34.1" cy="75.5" rx="1.9" ry="1.5" fill="#8c8d5c" opacity="0.73"/><ellipse cx="83.8" cy="76.7" rx="2.3" ry="1.5" fill="#96935f" opacity="0.57"/><ellipse cx="91.4" cy="74.5" rx="1.4" ry="0.6" fill="#96935f" opacity="0.69"/><ellipse cx="121.2" cy="63.5" rx="1.8" ry="0.8" fill="#6a6858" opacity="0.49"/><ellipse cx="119.4" cy="73.1" rx="0.6" ry="0.4" fill="#8c8d5c" opacity="0.62"/><ellipse cx="72.8" cy="79.8" rx="2.1" ry="1.6" fill="#c6c3b8" opacity="0.60"/><ellipse cx="125.7" cy="46.3" rx="1.0" ry="0.7" fill="#7f8557" opacity="0.55"/><ellipse cx="115.2" cy="84.2" rx="2.6" ry="1.6" fill="#8e8a6a" opacity="0.57"/><ellipse cx="91.9" cy="42.7" rx="0.7" ry="0.3" fill="#8e8a6a" opacity="0.70"/><ellipse cx="98.3" cy="63.0" rx="0.4" ry="0.3" fill="#8c8d5c" opacity="0.53"/><ellipse cx="42.9" cy="75.9" rx="0.7" ry="0.3" fill="#c6c3b8" opacity="0.88"/><ellipse cx="63.1" cy="82.8" rx="0.6" ry="0.3" fill="#5b5a4e" opacity="0.82"/><ellipse cx="71.9" cy="49.1" rx="0.8" ry="0.6" fill="#5b5a4e" opacity="0.59"/><ellipse cx="48.8" cy="78.3" rx="2.2" ry="1.1" fill="#96935f" opacity="0.89"/><ellipse cx="67.1" cy="66.6" rx="0.7" ry="0.4" fill="#a09c68" opacity="0.46"/><ellipse cx="124.1" cy="64.2" rx="1.0" ry="0.7" fill="#7f8557" opacity="0.67"/><ellipse cx="88.4" cy="44.8" rx="0.7" ry="0.4" fill="#a09c68" opacity="0.57"/><ellipse cx="60.6" cy="47.5" rx="0.7" ry="0.5" fill="#c6c3b8" opacity="0.69"/><ellipse cx="13.9" cy="60.0" rx="0.4" ry="0.2" fill="#8c8d5c" opacity="0.47"/><ellipse cx="19.9" cy="42.5" rx="0.5" ry="0.4" fill="#6a6858" opacity="0.73"/><ellipse cx="13.4" cy="73.4" rx="0.6" ry="0.4" fill="#5b5a4e" opacity="0.77"/><ellipse cx="89.8" cy="79.8" rx="0.4" ry="0.3" fill="#96935f" opacity="0.69"/><ellipse cx="110.6" cy="65.0" rx="0.7" ry="0.3" fill="#96935f" opacity="0.55"/><ellipse cx="94.8" cy="76.9" rx="2.2" ry="1.1" fill="#8c8d5c" opacity="0.55"/><ellipse cx="127.8" cy="80.2" rx="0.7" ry="0.3" fill="#7f8557" opacity="0.57"/><ellipse cx="12.4" cy="77.8" rx="1.2" ry="0.9" fill="#96935f" opacity="0.54"/><ellipse cx="80.4" cy="76.4" rx="0.6" ry="0.4" fill="#96935f" opacity="0.50"/><ellipse cx="64.7" cy="74.6" rx="1.3" ry="0.9" fill="#8c8d5c" opacity="0.67"/><ellipse cx="3.1" cy="74.8" rx="1.5" ry="1.2" fill="#c6c3b8" opacity="0.52"/><ellipse cx="23.6" cy="50.8" rx="1.1" ry="0.9" fill="#7f8557" opacity="0.71"/><ellipse cx="17.2" cy="71.3" rx="0.5" ry="0.2" fill="#a09c68" opacity="0.66"/><ellipse cx="66.0" cy="60.5" rx="1.2" ry="0.5" fill="#6a6858" opacity="0.53"/><ellipse cx="58.1" cy="73.8" rx="1.1" ry="0.5" fill="#7f8557" opacity="0.81"/><ellipse cx="41.4" cy="45.6" rx="0.9" ry="0.7" fill="#a09c68" opacity="0.71"/><ellipse cx="24.4" cy="67.1" rx="0.9" ry="0.7" fill="#5b5a4e" opacity="0.86"/><ellipse cx="95.3" cy="75.5" rx="1.9" ry="1.1" fill="#8e8a6a" opacity="0.80"/><ellipse cx="97.9" cy="59.4" rx="1.3" ry="0.6" fill="#96935f" opacity="0.50"/><ellipse cx="113.7" cy="84.6" rx="2.5" ry="1.0" fill="#5b5a4e" opacity="0.88"/><ellipse cx="85.3" cy="56.5" rx="1.1" ry="0.7" fill="#a09c68" opacity="0.68"/><ellipse cx="63.7" cy="51.2" rx="0.5" ry="0.3" fill="#8c8d5c" opacity="0.50"/><ellipse cx="13.8" cy="52.2" rx="0.8" ry="0.5" fill="#6a6858" opacity="0.74"/><ellipse cx="1.4" cy="53.1" rx="0.7" ry="0.4" fill="#a09c68" opacity="0.89"/><ellipse cx="72.7" cy="84.8" rx="1.9" ry="1.3" fill="#7f8557" opacity="0.70"/><ellipse cx="85.6" cy="83.1" rx="1.3" ry="1.0" fill="#a09c68" opacity="0.66"/><ellipse cx="21.6" cy="63.3" rx="1.3" ry="0.5" fill="#c6c3b8" opacity="0.64"/><ellipse cx="67.4" cy="67.7" rx="1.0" ry="0.5" fill="#5b5a4e" opacity="0.75"/><ellipse cx="95.7" cy="43.2" rx="0.8" ry="0.5" fill="#96935f" opacity="0.63"/><ellipse cx="87.6" cy="44.3" rx="0.6" ry="0.3" fill="#8e8a6a" opacity="0.48"/><ellipse cx="115.9" cy="60.5" rx="1.0" ry="0.8" fill="#6a6858" opacity="0.47"/><ellipse cx="12.6" cy="76.8" rx="2.2" ry="1.0" fill="#6a6858" opacity="0.72"/><ellipse cx="14.7" cy="68.8" rx="1.1" ry="0.5" fill="#8c8d5c" opacity="0.61"/><ellipse cx="19.8" cy="57.6" rx="0.6" ry="0.3" fill="#5b5a4e" opacity="0.74"/><ellipse cx="87.3" cy="57.7" rx="1.3" ry="0.9" fill="#96935f" opacity="0.78"/><ellipse cx="30.5" cy="46.9" rx="1.0" ry="0.7" fill="#8e8a6a" opacity="0.57"/><ellipse cx="78.1" cy="73.2" rx="1.7" ry="0.8" fill="#8c8d5c" opacity="0.54"/><ellipse cx="31.9" cy="84.1" rx="2.5" ry="1.9" fill="#8c8d5c" opacity="0.73"/><ellipse cx="1.2" cy="53.2" rx="0.4" ry="0.2" fill="#6a6858" opacity="0.69"/><ellipse cx="9.3" cy="45.7" rx="0.8" ry="0.5" fill="#8e8a6a" opacity="0.67"/><ellipse cx="45.3" cy="56.5" rx="0.9" ry="0.4" fill="#7f8557" opacity="0.65"/><ellipse cx="105.2" cy="78.0" rx="1.9" ry="1.1" fill="#5b5a4e" opacity="0.63"/><ellipse cx="19.3" cy="48.6" rx="1.0" ry="0.7" fill="#5b5a4e" opacity="0.70"/><ellipse cx="95.5" cy="81.6" rx="1.3" ry="0.7" fill="#7f8557" opacity="0.66"/><ellipse cx="41.5" cy="65.4" rx="1.0" ry="0.7" fill="#c6c3b8" opacity="0.58"/><ellipse cx="99.3" cy="45.3" rx="0.5" ry="0.4" fill="#7f8557" opacity="0.76"/><ellipse cx="63.3" cy="74.9" rx="1.0" ry="0.8" fill="#7f8557" opacity="0.78"/><ellipse cx="46.9" cy="47.0" rx="0.9" ry="0.6" fill="#5b5a4e" opacity="0.65"/><ellipse cx="102.8" cy="55.1" rx="0.7" ry="0.4" fill="#6a6858" opacity="0.49"/><ellipse cx="106.1" cy="43.0" rx="0.8" ry="0.5" fill="#6a6858" opacity="0.78"/><ellipse cx="47.1" cy="58.8" rx="0.6" ry="0.4" fill="#8c8d5c" opacity="0.79"/><ellipse cx="112.8" cy="54.1" rx="0.4" ry="0.3" fill="#96935f" opacity="0.71"/><ellipse cx="123.7" cy="70.0" rx="1.7" ry="0.7" fill="#5b5a4e" opacity="0.80"/><ellipse cx="10.8" cy="45.5" rx="0.9" ry="0.7" fill="#7f8557" opacity="0.46"/><ellipse cx="83.7" cy="46.2" rx="1.0" ry="0.5" fill="#6a6858" opacity="0.67"/><ellipse cx="116.2" cy="56.5" rx="0.9" ry="0.5" fill="#8e8a6a" opacity="0.75"/><ellipse cx="63.2" cy="65.1" rx="1.5" ry="1.0" fill="#a09c68" opacity="0.79"/><ellipse cx="126.2" cy="57.0" rx="0.4" ry="0.2" fill="#7f8557" opacity="0.85"/><ellipse cx="122.6" cy="69.5" rx="1.3" ry="0.9" fill="#7f8557" opacity="0.64"/><ellipse cx="53.8" cy="48.3" rx="1.0" ry="0.8" fill="#a09c68" opacity="0.76"/><ellipse cx="41.1" cy="58.7" rx="1.0" ry="0.5" fill="#c6c3b8" opacity="0.59"/><ellipse cx="14.7" cy="69.9" rx="1.7" ry="0.8" fill="#8c8d5c" opacity="0.79"/><ellipse cx="2.2" cy="62.7" rx="1.5" ry="0.8" fill="#6a6858" opacity="0.53"/><ellipse cx="27.8" cy="52.1" rx="1.1" ry="0.7" fill="#8c8d5c" opacity="0.85"/><ellipse cx="51.5" cy="81.2" rx="2.4" ry="1.6" fill="#c6c3b8" opacity="0.83"/><ellipse cx="62.0" cy="59.3" rx="1.6" ry="1.0" fill="#7f8557" opacity="0.67"/><ellipse cx="28.3" cy="44.1" rx="1.0" ry="0.7" fill="#a09c68" opacity="0.89"/><ellipse cx="101.7" cy="75.3" rx="1.9" ry="0.8" fill="#6a6858" opacity="0.85"/><ellipse cx="111.9" cy="80.9" rx="1.4" ry="0.7" fill="#a09c68" opacity="0.72"/><ellipse cx="20.1" cy="48.7" rx="0.7" ry="0.3" fill="#96935f" opacity="0.74"/><ellipse cx="127.1" cy="53.5" rx="0.9" ry="0.4" fill="#96935f" opacity="0.45"/><ellipse cx="105.1" cy="78.4" rx="2.1" ry="0.9" fill="#5b5a4e" opacity="0.73"/><ellipse cx="67.6" cy="80.3" rx="1.9" ry="0.8" fill="#5b5a4e" opacity="0.46"/><ellipse cx="24.0" cy="50.3" rx="1.0" ry="0.7" fill="#c6c3b8" opacity="0.54"/><ellipse cx="69.6" cy="64.6" rx="0.6" ry="0.5" fill="#96935f" opacity="0.63"/><ellipse cx="71.2" cy="84.9" rx="1.9" ry="0.8" fill="#7f8557" opacity="0.76"/><ellipse cx="13.5" cy="59.0" rx="1.0" ry="0.8" fill="#7f8557" opacity="0.74"/><ellipse cx="1.6" cy="58.2" rx="1.2" ry="0.6" fill="#7f8557" opacity="0.66"/><ellipse cx="1.3" cy="84.6" rx="2.2" ry="1.1" fill="#96935f" opacity="0.58"/><ellipse cx="48.1" cy="65.2" rx="0.8" ry="0.4" fill="#7f8557" opacity="0.49"/><ellipse cx="24.1" cy="58.2" rx="0.5" ry="0.3" fill="#5b5a4e" opacity="0.70"/><ellipse cx="92.6" cy="56.3" rx="1.3" ry="0.6" fill="#8c8d5c" opacity="0.51"/><ellipse cx="80.7" cy="49.7" rx="0.6" ry="0.2" fill="#c6c3b8" opacity="0.72"/><ellipse cx="11.5" cy="51.7" rx="0.5" ry="0.2" fill="#a09c68" opacity="0.80"/><ellipse cx="43.7" cy="77.4" rx="2.2" ry="1.0" fill="#8c8d5c" opacity="0.82"/><ellipse cx="49.4" cy="56.3" rx="0.9" ry="0.3" fill="#8e8a6a" opacity="0.89"/><ellipse cx="101.1" cy="70.4" rx="1.4" ry="0.6" fill="#8e8a6a" opacity="0.53"/><ellipse cx="39.3" cy="61.0" rx="1.1" ry="0.5" fill="#96935f" opacity="0.82"/><ellipse cx="78.3" cy="48.8" rx="1.0" ry="0.8" fill="#6a6858" opacity="0.61"/><ellipse cx="64.1" cy="48.1" rx="0.9" ry="0.7" fill="#6a6858" opacity="0.71"/><ellipse cx="3.4" cy="70.4" rx="1.7" ry="0.8" fill="#c6c3b8" opacity="0.71"/><ellipse cx="89.2" cy="56.2" rx="1.4" ry="0.8" fill="#7f8557" opacity="0.65"/><ellipse cx="93.4" cy="52.3" rx="0.9" ry="0.6" fill="#96935f" opacity="0.53"/><ellipse cx="95.5" cy="80.6" rx="1.1" ry="0.5" fill="#8c8d5c" opacity="0.58"/><ellipse cx="114.8" cy="52.4" rx="0.9" ry="0.7" fill="#96935f" opacity="0.72"/><ellipse cx="103.8" cy="61.5" rx="0.9" ry="0.7" fill="#96935f" opacity="0.59"/><ellipse cx="85.9" cy="73.7" rx="1.1" ry="0.7" fill="#8c8d5c" opacity="0.52"/><ellipse cx="52.7" cy="43.4" rx="0.7" ry="0.3" fill="#a09c68" opacity="0.53"/><ellipse cx="66.5" cy="53.3" rx="1.0" ry="0.5" fill="#8c8d5c" opacity="0.77"/><ellipse cx="100.8" cy="59.3" rx="1.0" ry="0.4" fill="#8e8a6a" opacity="0.64"/><ellipse cx="79.8" cy="71.6" rx="1.7" ry="1.2" fill="#c6c3b8" opacity="0.83"/><ellipse cx="109.4" cy="59.6" rx="0.9" ry="0.6" fill="#8e8a6a" opacity="0.69"/><ellipse cx="55.3" cy="80.9" rx="1.1" ry="0.5" fill="#a09c68" opacity="0.78"/><ellipse cx="76.5" cy="74.3" rx="1.0" ry="0.6" fill="#8c8d5c" opacity="0.83"/><ellipse cx="31.0" cy="79.5" rx="2.4" ry="1.4" fill="#7f8557" opacity="0.69"/><ellipse cx="30.6" cy="55.2" rx="0.8" ry="0.4" fill="#7f8557" opacity="0.88"/><ellipse cx="85.2" cy="79.3" rx="1.3" ry="0.9" fill="#6a6858" opacity="0.74"/><ellipse cx="54.0" cy="47.3" rx="0.5" ry="0.3" fill="#96935f" opacity="0.51"/><ellipse cx="68.8" cy="82.9" rx="0.4" ry="0.2" fill="#5b5a4e" opacity="0.46"/><ellipse cx="22.0" cy="61.0" rx="1.0" ry="0.6" fill="#96935f" opacity="0.61"/><ellipse cx="74.9" cy="44.0" rx="0.4" ry="0.3" fill="#5b5a4e" opacity="0.60"/><ellipse cx="18.3" cy="75.4" rx="1.9" ry="1.4" fill="#6a6858" opacity="0.58"/><ellipse cx="118.1" cy="80.6" rx="0.8" ry="0.6" fill="#8e8a6a" opacity="0.85"/><ellipse cx="2.1" cy="69.3" rx="1.5" ry="1.0" fill="#6a6858" opacity="0.54"/><ellipse cx="112.7" cy="44.2" rx="0.5" ry="0.3" fill="#8e8a6a" opacity="0.88"/><ellipse cx="35.1" cy="60.1" rx="1.5" ry="0.8" fill="#c6c3b8" opacity="0.64"/><ellipse cx="21.7" cy="79.0" rx="0.6" ry="0.4" fill="#5b5a4e" opacity="0.53"/><ellipse cx="30.1" cy="70.6" rx="1.7" ry="1.0" fill="#7f8557" opacity="0.72"/><ellipse cx="29.3" cy="54.9" rx="1.4" ry="0.9" fill="#7f8557" opacity="0.75"/><ellipse cx="59.2" cy="45.3" rx="1.0" ry="0.4" fill="#8c8d5c" opacity="0.45"/><ellipse cx="75.1" cy="65.1" rx="1.0" ry="0.6" fill="#8c8d5c" opacity="0.56"/><ellipse cx="35.7" cy="65.6" rx="0.7" ry="0.5" fill="#8c8d5c" opacity="0.73"/><ellipse cx="117.3" cy="67.2" rx="0.4" ry="0.3" fill="#8c8d5c" opacity="0.53"/><ellipse cx="71.2" cy="69.7" rx="1.0" ry="0.7" fill="#5b5a4e" opacity="0.68"/><ellipse cx="108.2" cy="71.4" rx="1.3" ry="1.0" fill="#96935f" opacity="0.72"/><ellipse cx="98.7" cy="46.8" rx="0.7" ry="0.5" fill="#5b5a4e" opacity="0.80"/><ellipse cx="101.3" cy="52.1" rx="0.9" ry="0.4" fill="#c6c3b8" opacity="0.57"/><ellipse cx="25.9" cy="83.7" rx="0.5" ry="0.3" fill="#96935f" opacity="0.60"/><ellipse cx="77.9" cy="68.2" rx="1.7" ry="1.0" fill="#8c8d5c" opacity="0.48"/><ellipse cx="116.1" cy="66.5" rx="1.2" ry="0.9" fill="#6a6858" opacity="0.73"/><ellipse cx="6.9" cy="60.3" rx="1.3" ry="0.9" fill="#5b5a4e" opacity="0.79"/><ellipse cx="63.8" cy="70.0" rx="1.3" ry="0.7" fill="#96935f" opacity="0.76"/><ellipse cx="106.4" cy="75.8" rx="0.5" ry="0.3" fill="#8e8a6a" opacity="0.76"/><ellipse cx="90.1" cy="83.2" rx="0.7" ry="0.5" fill="#96935f" opacity="0.52"/><ellipse cx="58.3" cy="74.0" rx="0.5" ry="0.2" fill="#96935f" opacity="0.49"/><ellipse cx="71.2" cy="62.3" rx="1.7" ry="1.3" fill="#6a6858" opacity="0.58"/><ellipse cx="15.2" cy="78.8" rx="1.3" ry="0.5" fill="#6a6858" opacity="0.61"/><ellipse cx="43.1" cy="84.2" rx="1.8" ry="0.7" fill="#a09c68" opacity="0.71"/><ellipse cx="127.3" cy="73.7" rx="1.4" ry="1.1" fill="#96935f" opacity="0.66"/><ellipse cx="50.3" cy="78.3" rx="1.2" ry="0.8" fill="#6a6858" opacity="0.64"/><ellipse cx="31.6" cy="76.1" rx="2.0" ry="1.2" fill="#c6c3b8" opacity="0.79"/><ellipse cx="60.5" cy="63.1" rx="1.3" ry="0.6" fill="#a09c68" opacity="0.64"/><ellipse cx="6.0" cy="53.9" rx="1.3" ry="0.9" fill="#96935f" opacity="0.78"/><ellipse cx="65.6" cy="66.4" rx="1.4" ry="0.7" fill="#8c8d5c" opacity="0.52"/><ellipse cx="119.9" cy="57.5" rx="1.3" ry="0.9" fill="#7f8557" opacity="0.46"/><ellipse cx="41.2" cy="58.5" rx="0.5" ry="0.4" fill="#7f8557" opacity="0.75"/><ellipse cx="38.7" cy="68.1" rx="1.2" ry="0.6" fill="#96935f" opacity="0.46"/><ellipse cx="40.0" cy="60.2" rx="1.1" ry="0.5" fill="#5b5a4e" opacity="0.59"/><ellipse cx="57.8" cy="58.2" rx="1.4" ry="1.1" fill="#c6c3b8" opacity="0.63"/><ellipse cx="49.5" cy="79.2" rx="0.9" ry="0.4" fill="#8e8a6a" opacity="0.73"/><ellipse cx="18.0" cy="78.5" rx="1.9" ry="1.1" fill="#8c8d5c" opacity="0.81"/><ellipse cx="124.9" cy="54.8" rx="1.1" ry="0.8" fill="#6a6858" opacity="0.70"/><ellipse cx="45.2" cy="47.3" rx="1.0" ry="0.5" fill="#5b5a4e" opacity="0.49"/><ellipse cx="54.7" cy="58.9" rx="0.5" ry="0.3" fill="#96935f" opacity="0.77"/><ellipse cx="28.4" cy="81.8" rx="0.8" ry="0.6" fill="#8e8a6a" opacity="0.75"/><ellipse cx="30.7" cy="46.0" rx="0.6" ry="0.4" fill="#96935f" opacity="0.67"/><ellipse cx="32.9" cy="78.7" rx="1.0" ry="0.8" fill="#a09c68" opacity="0.50"/><ellipse cx="116.4" cy="81.2" rx="1.0" ry="0.5" fill="#5b5a4e" opacity="0.66"/><ellipse cx="41.7" cy="52.9" rx="0.4" ry="0.2" fill="#5b5a4e" opacity="0.57"/><ellipse cx="85.5" cy="50.0" rx="0.8" ry="0.5" fill="#8e8a6a" opacity="0.46"/><ellipse cx="90.5" cy="51.3" rx="0.5" ry="0.2" fill="#a09c68" opacity="0.73"/><ellipse cx="8.1" cy="44.9" rx="0.7" ry="0.4" fill="#a09c68" opacity="0.47"/><ellipse cx="17.4" cy="63.8" rx="0.8" ry="0.5" fill="#8c8d5c" opacity="0.52"/><ellipse cx="24.6" cy="51.8" rx="1.0" ry="0.5" fill="#8c8d5c" opacity="0.87"/><ellipse cx="125.4" cy="42.2" rx="0.7" ry="0.5" fill="#7f8557" opacity="0.73"/><ellipse cx="71.8" cy="77.7" rx="2.3" ry="1.2" fill="#8c8d5c" opacity="0.59"/><ellipse cx="91.6" cy="71.9" rx="1.6" ry="1.3" fill="#96935f" opacity="0.60"/><ellipse cx="88.2" cy="76.6" rx="1.0" ry="0.6" fill="#7f8557" opacity="0.69"/><ellipse cx="30.3" cy="52.7" rx="0.7" ry="0.3" fill="#96935f" opacity="0.84"/><ellipse cx="126.6" cy="77.2" rx="2.1" ry="1.1" fill="#c6c3b8" opacity="0.68"/><ellipse cx="86.9" cy="43.7" rx="0.8" ry="0.4" fill="#c6c3b8" opacity="0.47"/><ellipse cx="32.5" cy="63.8" rx="1.5" ry="0.8" fill="#5b5a4e" opacity="0.62"/><ellipse cx="87.4" cy="49.9" rx="1.1" ry="0.5" fill="#96935f" opacity="0.71"/><ellipse cx="53.8" cy="72.4" rx="1.5" ry="1.1" fill="#96935f" opacity="0.54"/><ellipse cx="79.5" cy="54.6" rx="1.1" ry="0.8" fill="#96935f" opacity="0.57"/><ellipse cx="34.7" cy="52.8" rx="1.0" ry="0.6" fill="#96935f" opacity="0.47"/><ellipse cx="91.3" cy="47.1" rx="0.4" ry="0.2" fill="#7f8557" opacity="0.63"/><ellipse cx="115.8" cy="77.8" rx="2.1" ry="1.0" fill="#7f8557" opacity="0.59"/><ellipse cx="102.5" cy="78.1" rx="1.0" ry="0.5" fill="#a09c68" opacity="0.79"/><ellipse cx="125.6" cy="58.7" rx="1.2" ry="0.8" fill="#96935f" opacity="0.65"/><ellipse cx="106.7" cy="65.9" rx="1.7" ry="1.3" fill="#a09c68" opacity="0.50"/><ellipse cx="41.4" cy="42.8" rx="0.7" ry="0.3" fill="#a09c68" opacity="0.57"/><ellipse cx="29.1" cy="62.7" rx="0.9" ry="0.5" fill="#8c8d5c" opacity="0.45"/><ellipse cx="97.4" cy="70.8" rx="0.4" ry="0.2" fill="#8c8d5c" opacity="0.90"/><ellipse cx="52.3" cy="43.4" rx="0.6" ry="0.4" fill="#8c8d5c" opacity="0.55"/><ellipse cx="78.9" cy="77.6" rx="0.9" ry="0.4" fill="#8c8d5c" opacity="0.90"/><ellipse cx="56.7" cy="77.8" rx="1.9" ry="0.9" fill="#8c8d5c" opacity="0.69"/><ellipse cx="86.4" cy="53.7" rx="0.4" ry="0.3" fill="#96935f" opacity="0.45"/><ellipse cx="26.9" cy="83.2" rx="0.4" ry="0.3" fill="#6a6858" opacity="0.81"/><ellipse cx="94.1" cy="59.2" rx="1.4" ry="1.0" fill="#7f8557" opacity="0.87"/><ellipse cx="61.7" cy="78.1" rx="1.2" ry="0.9" fill="#8c8d5c" opacity="0.45"/><ellipse cx="18.0" cy="55.9" rx="1.2" ry="0.7" fill="#5b5a4e" opacity="0.81"/><ellipse cx="46.7" cy="69.4" rx="1.0" ry="0.5" fill="#8e8a6a" opacity="0.72"/><ellipse cx="33.9" cy="51.2" rx="0.6" ry="0.2" fill="#96935f" opacity="0.70"/><ellipse cx="87.1" cy="49.6" rx="0.5" ry="0.2" fill="#8e8a6a" opacity="0.53"/><ellipse cx="2.8" cy="59.2" rx="0.5" ry="0.2" fill="#6a6858" opacity="0.46"/><ellipse cx="22.3" cy="44.9" rx="0.8" ry="0.5" fill="#8e8a6a" opacity="0.64"/><ellipse cx="123.2" cy="51.4" rx="0.8" ry="0.5" fill="#96935f" opacity="0.82"/><ellipse cx="9.0" cy="58.8" rx="1.5" ry="1.1" fill="#8e8a6a" opacity="0.69"/><ellipse cx="1.3" cy="73.4" rx="1.6" ry="1.2" fill="#8c8d5c" opacity="0.55"/><ellipse cx="78.9" cy="80.2" rx="2.2" ry="1.4" fill="#7f8557" opacity="0.50"/><ellipse cx="94.6" cy="74.0" rx="1.2" ry="0.7" fill="#6a6858" opacity="0.62"/><ellipse cx="69.3" cy="43.8" rx="0.9" ry="0.6" fill="#c6c3b8" opacity="0.65"/><ellipse cx="76.0" cy="67.6" rx="1.9" ry="0.9" fill="#5b5a4e" opacity="0.78"/><ellipse cx="40.1" cy="73.7" rx="2.2" ry="1.2" fill="#96935f" opacity="0.79"/><ellipse cx="114.9" cy="46.8" rx="0.5" ry="0.4" fill="#96935f" opacity="0.82"/><ellipse cx="102.1" cy="64.0" rx="1.8" ry="0.8" fill="#8c8d5c" opacity="0.77"/><ellipse cx="32.1" cy="76.7" rx="1.3" ry="0.8" fill="#6a6858" opacity="0.67"/><ellipse cx="123.1" cy="52.3" rx="0.5" ry="0.3" fill="#c6c3b8" opacity="0.84"/><ellipse cx="9.2" cy="63.4" rx="0.5" ry="0.4" fill="#7f8557" opacity="0.81"/><ellipse cx="19.4" cy="57.7" rx="0.5" ry="0.2" fill="#8e8a6a" opacity="0.88"/><ellipse cx="28.1" cy="54.4" rx="0.8" ry="0.5" fill="#7f8557" opacity="0.73"/><ellipse cx="115.4" cy="45.1" rx="1.0" ry="0.5" fill="#8e8a6a" opacity="0.84"/><ellipse cx="93.1" cy="50.5" rx="1.0" ry="0.6" fill="#8c8d5c" opacity="0.82"/><ellipse cx="89.6" cy="78.3" rx="2.3" ry="1.5" fill="#6a6858" opacity="0.76"/><ellipse cx="23.1" cy="47.5" rx="0.9" ry="0.5" fill="#96935f" opacity="0.58"/><ellipse cx="33.1" cy="56.8" rx="1.1" ry="0.6" fill="#8c8d5c" opacity="0.76"/><ellipse cx="94.2" cy="57.5" rx="0.8" ry="0.4" fill="#7f8557" opacity="0.57"/><ellipse cx="48.0" cy="68.3" rx="0.8" ry="0.4" fill="#8c8d5c" opacity="0.61"/><ellipse cx="90.1" cy="52.1" rx="0.9" ry="0.5" fill="#5b5a4e" opacity="0.88"/><ellipse cx="10.0" cy="69.9" rx="0.8" ry="0.5" fill="#6a6858" opacity="0.78"/><ellipse cx="77.0" cy="61.3" rx="0.5" ry="0.3" fill="#96935f" opacity="0.75"/><ellipse cx="34.3" cy="70.5" rx="0.4" ry="0.3" fill="#96935f" opacity="0.51"/><ellipse cx="114.6" cy="52.8" rx="0.8" ry="0.4" fill="#7f8557" opacity="0.70"/><ellipse cx="12.7" cy="80.6" rx="0.6" ry="0.3" fill="#8e8a6a" opacity="0.46"/><ellipse cx="75.5" cy="72.0" rx="2.1" ry="1.6" fill="#96935f" opacity="0.66"/><ellipse cx="46.3" cy="62.0" rx="0.8" ry="0.5" fill="#6a6858" opacity="0.89"/><ellipse cx="127.1" cy="59.0" rx="1.4" ry="0.9" fill="#7f8557" opacity="0.90"/><ellipse cx="8.5" cy="61.9" rx="0.9" ry="0.6" fill="#6a6858" opacity="0.68"/><ellipse cx="74.8" cy="63.4" rx="1.6" ry="0.9" fill="#8c8d5c" opacity="0.45"/><ellipse cx="122.7" cy="71.9" rx="1.8" ry="1.4" fill="#c6c3b8" opacity="0.80"/><ellipse cx="15.3" cy="62.2" rx="0.4" ry="0.3" fill="#8c8d5c" opacity="0.50"/><ellipse cx="52.9" cy="66.1" rx="1.9" ry="1.3" fill="#7f8557" opacity="0.70"/><ellipse cx="8.7" cy="52.2" rx="1.0" ry="0.6" fill="#5b5a4e" opacity="0.58"/><ellipse cx="99.5" cy="52.6" rx="0.8" ry="0.3" fill="#96935f" opacity="0.53"/><ellipse cx="13.4" cy="47.9" rx="1.1" ry="0.8" fill="#96935f" opacity="0.51"/><ellipse cx="72.2" cy="49.5" rx="0.9" ry="0.7" fill="#7f8557" opacity="0.64"/><ellipse cx="1.4" cy="48.6" rx="1.0" ry="0.7" fill="#a09c68" opacity="0.52"/><ellipse cx="68.0" cy="43.2" rx="0.5" ry="0.2" fill="#8c8d5c" opacity="0.63"/><ellipse cx="38.3" cy="51.2" rx="0.9" ry="0.6" fill="#a09c68" opacity="0.60"/><ellipse cx="62.6" cy="70.1" rx="1.9" ry="1.5" fill="#7f8557" opacity="0.63"/><ellipse cx="38.3" cy="73.8" rx="0.9" ry="0.5" fill="#c6c3b8" opacity="0.62"/><ellipse cx="83.0" cy="56.4" rx="0.5" ry="0.3" fill="#96935f" opacity="0.69"/><ellipse cx="70.1" cy="59.2" rx="0.7" ry="0.3" fill="#96935f" opacity="0.61"/><ellipse cx="121.7" cy="64.4" rx="1.2" ry="0.8" fill="#8e8a6a" opacity="0.63"/><ellipse cx="123.7" cy="42.3" rx="0.7" ry="0.6" fill="#8e8a6a" opacity="0.88"/><ellipse cx="88.8" cy="78.1" rx="0.8" ry="0.6" fill="#8c8d5c" opacity="0.59"/><ellipse cx="63.7" cy="64.2" rx="1.5" ry="0.6" fill="#96935f" opacity="0.72"/><ellipse cx="103.4" cy="82.6" rx="1.8" ry="1.0" fill="#7f8557" opacity="0.58"/><ellipse cx="87.0" cy="45.7" rx="1.0" ry="0.8" fill="#8e8a6a" opacity="0.46"/><ellipse cx="19.1" cy="48.7" rx="0.6" ry="0.3" fill="#c6c3b8" opacity="0.47"/><ellipse cx="80.0" cy="65.7" rx="1.8" ry="1.2" fill="#7f8557" opacity="0.79"/><ellipse cx="74.2" cy="42.2" rx="0.8" ry="0.4" fill="#7f8557" opacity="0.53"/><ellipse cx="10.7" cy="71.5" rx="0.6" ry="0.5" fill="#a09c68" opacity="0.81"/><ellipse cx="57.0" cy="80.6" rx="1.9" ry="1.4" fill="#8e8a6a" opacity="0.75"/><ellipse cx="70.2" cy="46.9" rx="0.5" ry="0.3" fill="#7f8557" opacity="0.87"/><ellipse cx="27.0" cy="59.8" rx="1.1" ry="0.8" fill="#96935f" opacity="0.66"/><ellipse cx="4.0" cy="60.6" rx="0.9" ry="0.6" fill="#c6c3b8" opacity="0.67"/><ellipse cx="88.3" cy="58.7" rx="1.3" ry="0.6" fill="#96935f" opacity="0.80"/><ellipse cx="41.5" cy="42.6" rx="0.8" ry="0.6" fill="#a09c68" opacity="0.72"/><ellipse cx="66.6" cy="58.7" rx="1.1" ry="0.8" fill="#7f8557" opacity="0.52"/><ellipse cx="90.1" cy="59.0" rx="0.5" ry="0.3" fill="#8e8a6a" opacity="0.78"/><ellipse cx="73.6" cy="53.1" rx="0.5" ry="0.3" fill="#7f8557" opacity="0.55"/><ellipse cx="116.2" cy="44.8" rx="0.5" ry="0.3" fill="#c6c3b8" opacity="0.62"/><ellipse cx="15.0" cy="50.0" rx="0.9" ry="0.6" fill="#96935f" opacity="0.47"/><ellipse cx="89.4" cy="66.4" rx="1.2" ry="0.7" fill="#96935f" opacity="0.81"/><ellipse cx="12.5" cy="75.7" rx="0.8" ry="0.4" fill="#8e8a6a" opacity="0.50"/><ellipse cx="97.9" cy="67.0" rx="1.8" ry="1.4" fill="#8e8a6a" opacity="0.50"/><ellipse cx="100.8" cy="76.7" rx="1.6" ry="1.2" fill="#5b5a4e" opacity="0.50"/><ellipse cx="45.8" cy="49.4" rx="1.1" ry="0.7" fill="#5b5a4e" opacity="0.56"/><ellipse cx="16.8" cy="62.8" rx="0.8" ry="0.4" fill="#5b5a4e" opacity="0.87"/><ellipse cx="19.5" cy="58.8" rx="1.4" ry="0.9" fill="#96935f" opacity="0.72"/><ellipse cx="69.6" cy="73.6" rx="1.4" ry="0.9" fill="#5b5a4e" opacity="0.59"/><ellipse cx="54.7" cy="75.5" rx="1.6" ry="1.0" fill="#8e8a6a" opacity="0.61"/><ellipse cx="27.7" cy="69.5" rx="0.8" ry="0.6" fill="#7f8557" opacity="0.88"/><ellipse cx="14.1" cy="82.4" rx="1.8" ry="0.8" fill="#8c8d5c" opacity="0.50"/><ellipse cx="72.4" cy="47.1" rx="1.1" ry="0.6" fill="#96935f" opacity="0.48"/><ellipse cx="85.3" cy="44.9" rx="0.4" ry="0.3" fill="#7f8557" opacity="0.65"/><ellipse cx="87.0" cy="45.7" rx="0.9" ry="0.6" fill="#6a6858" opacity="0.85"/><ellipse cx="13.0" cy="48.0" rx="0.5" ry="0.4" fill="#8c8d5c" opacity="0.70"/><ellipse cx="124.5" cy="66.1" rx="0.6" ry="0.3" fill="#8e8a6a" opacity="0.55"/><ellipse cx="34.9" cy="48.5" rx="0.8" ry="0.6" fill="#96935f" opacity="0.84"/><ellipse cx="119.7" cy="42.9" rx="0.7" ry="0.4" fill="#8e8a6a" opacity="0.87"/><ellipse cx="11.1" cy="64.3" rx="1.8" ry="0.7" fill="#7f8557" opacity="0.58"/><ellipse cx="38.5" cy="84.5" rx="1.3" ry="0.6" fill="#96935f" opacity="0.76"/><ellipse cx="66.5" cy="66.9" rx="1.6" ry="1.1" fill="#8c8d5c" opacity="0.88"/><ellipse cx="27.7" cy="59.0" rx="0.7" ry="0.4" fill="#96935f" opacity="0.46"/><ellipse cx="98.6" cy="53.3" rx="1.0" ry="0.6" fill="#7f8557" opacity="0.61"/><ellipse cx="83.4" cy="82.0" rx="1.3" ry="0.6" fill="#6a6858" opacity="0.56"/><ellipse cx="61.3" cy="75.7" rx="1.0" ry="0.5" fill="#5b5a4e" opacity="0.72"/><ellipse cx="73.5" cy="66.7" rx="0.4" ry="0.2" fill="#7f8557" opacity="0.60"/><ellipse cx="93.0" cy="71.0" rx="1.8" ry="1.1" fill="#7f8557" opacity="0.56"/><ellipse cx="27.9" cy="59.8" rx="1.6" ry="0.9" fill="#8c8d5c" opacity="0.90"/><ellipse cx="49.6" cy="47.8" rx="1.0" ry="0.7" fill="#8e8a6a" opacity="0.90"/><ellipse cx="26.5" cy="81.0" rx="1.6" ry="1.2" fill="#7f8557" opacity="0.66"/><ellipse cx="104.7" cy="42.6" rx="0.7" ry="0.4" fill="#7f8557" opacity="0.64"/><ellipse cx="20.3" cy="44.9" rx="0.5" ry="0.3" fill="#6a6858" opacity="0.87"/><ellipse cx="43.8" cy="82.0" rx="0.7" ry="0.5" fill="#8c8d5c" opacity="0.54"/><ellipse cx="17.4" cy="71.2" rx="1.9" ry="1.3" fill="#c6c3b8" opacity="0.62"/><ellipse cx="93.0" cy="81.7" rx="0.7" ry="0.5" fill="#96935f" opacity="0.78"/><ellipse cx="86.6" cy="47.3" rx="0.6" ry="0.4" fill="#5b5a4e" opacity="0.69"/><ellipse cx="69.2" cy="66.4" rx="1.6" ry="1.0" fill="#7f8557" opacity="0.74"/><ellipse cx="2.1" cy="81.6" rx="2.5" ry="1.9" fill="#96935f" opacity="0.52"/><ellipse cx="42.3" cy="66.4" rx="0.8" ry="0.6" fill="#c6c3b8" opacity="0.61"/><ellipse cx="127.7" cy="63.0" rx="0.5" ry="0.2" fill="#c6c3b8" opacity="0.89"/><ellipse cx="3.1" cy="74.8" rx="1.2" ry="0.5" fill="#96935f" opacity="0.47"/><ellipse cx="51.4" cy="77.4" rx="2.3" ry="0.9" fill="#c6c3b8" opacity="0.73"/><ellipse cx="8.1" cy="43.1" rx="0.6" ry="0.3" fill="#8c8d5c" opacity="0.60"/><ellipse cx="108.5" cy="66.2" rx="1.4" ry="0.7" fill="#8e8a6a" opacity="0.52"/><ellipse cx="18.4" cy="66.9" rx="1.3" ry="0.8" fill="#c6c3b8" opacity="0.57"/><ellipse cx="121.5" cy="63.1" rx="1.3" ry="0.9" fill="#96935f" opacity="0.66"/><ellipse cx="71.9" cy="81.5" rx="2.0" ry="1.6" fill="#8e8a6a" opacity="0.56"/><ellipse cx="74.7" cy="48.8" rx="1.1" ry="0.6" fill="#7f8557" opacity="0.74"/><ellipse cx="0.4" cy="62.6" rx="0.6" ry="0.4" fill="#a09c68" opacity="0.76"/><ellipse cx="84.8" cy="59.2" rx="1.0" ry="0.7" fill="#8c8d5c" opacity="0.49"/><ellipse cx="63.7" cy="62.7" rx="1.3" ry="1.0" fill="#96935f" opacity="0.47"/><ellipse cx="35.9" cy="44.2" rx="0.7" ry="0.4" fill="#8c8d5c" opacity="0.56"/><ellipse cx="115.6" cy="63.7" rx="1.0" ry="0.6" fill="#7f8557" opacity="0.67"/><ellipse cx="61.7" cy="54.5" rx="1.3" ry="0.8" fill="#8c8d5c" opacity="0.74"/><ellipse cx="88.3" cy="61.2" rx="0.8" ry="0.5" fill="#8c8d5c" opacity="0.81"/><ellipse cx="91.1" cy="76.8" rx="2.0" ry="0.9" fill="#5b5a4e" opacity="0.77"/><ellipse cx="5.7" cy="76.8" rx="2.3" ry="1.5" fill="#c6c3b8" opacity="0.81"/><ellipse cx="78.1" cy="81.2" rx="2.4" ry="1.6" fill="#7f8557" opacity="0.89"/><ellipse cx="20.4" cy="53.2" rx="0.7" ry="0.4" fill="#5b5a4e" opacity="0.53"/><ellipse cx="88.9" cy="74.6" rx="2.2" ry="1.5" fill="#7f8557" opacity="0.75"/><ellipse cx="55.8" cy="59.5" rx="0.9" ry="0.6" fill="#96935f" opacity="0.87"/><ellipse cx="81.8" cy="63.2" rx="0.9" ry="0.5" fill="#8c8d5c" opacity="0.67"/><ellipse cx="125.3" cy="51.9" rx="1.0" ry="0.4" fill="#96935f" opacity="0.68"/><ellipse cx="40.4" cy="53.7" rx="0.6" ry="0.4" fill="#7f8557" opacity="0.60"/><ellipse cx="118.7" cy="81.2" rx="1.0" ry="0.8" fill="#5b5a4e" opacity="0.88"/><ellipse cx="99.1" cy="56.3" rx="0.7" ry="0.4" fill="#8c8d5c" opacity="0.49"/><ellipse cx="90.3" cy="44.2" rx="0.8" ry="0.5" fill="#5b5a4e" opacity="0.54"/><ellipse cx="74.3" cy="52.4" rx="0.7" ry="0.3" fill="#96935f" opacity="0.58"/><ellipse cx="110.1" cy="78.8" rx="1.5" ry="0.7" fill="#6a6858" opacity="0.81"/><ellipse cx="117.3" cy="45.4" rx="0.7" ry="0.4" fill="#a09c68" opacity="0.79"/><ellipse cx="71.1" cy="69.6" rx="2.0" ry="1.5" fill="#7f8557" opacity="0.64"/><ellipse cx="1.6" cy="45.8" rx="0.5" ry="0.4" fill="#96935f" opacity="0.53"/><ellipse cx="124.0" cy="75.8" rx="1.5" ry="1.2" fill="#5b5a4e" opacity="0.80"/><ellipse cx="82.9" cy="72.4" rx="1.2" ry="0.7" fill="#96935f" opacity="0.54"/><ellipse cx="32.3" cy="80.9" rx="1.6" ry="0.6" fill="#c6c3b8" opacity="0.76"/><ellipse cx="56.0" cy="47.5" rx="0.7" ry="0.4" fill="#6a6858" opacity="0.63"/><ellipse cx="83.2" cy="71.3" rx="1.5" ry="0.6" fill="#96935f" opacity="0.56"/><ellipse cx="73.0" cy="59.3" rx="0.9" ry="0.6" fill="#7f8557" opacity="0.54"/><ellipse cx="31.4" cy="73.9" rx="2.2" ry="1.7" fill="#7f8557" opacity="0.60"/><ellipse cx="2.8" cy="77.9" rx="1.8" ry="1.2" fill="#a09c68" opacity="0.84"/><ellipse cx="24.5" cy="43.5" rx="0.5" ry="0.2" fill="#6a6858" opacity="0.61"/><ellipse cx="55.9" cy="61.5" rx="0.8" ry="0.5" fill="#5b5a4e" opacity="0.73"/><ellipse cx="11.4" cy="73.6" rx="1.5" ry="1.0" fill="#a09c68" opacity="0.76"/><ellipse cx="64.6" cy="76.4" rx="2.2" ry="1.7" fill="#8c8d5c" opacity="0.58"/><ellipse cx="92.7" cy="82.8" rx="1.8" ry="1.2" fill="#a09c68" opacity="0.55"/><ellipse cx="38.2" cy="67.8" rx="0.5" ry="0.3" fill="#a09c68" opacity="0.46"/><ellipse cx="53.3" cy="75.0" rx="0.9" ry="0.6" fill="#96935f" opacity="0.58"/><ellipse cx="122.3" cy="74.1" rx="1.2" ry="0.7" fill="#8c8d5c" opacity="0.82"/><ellipse cx="107.2" cy="58.8" rx="1.1" ry="0.8" fill="#8e8a6a" opacity="0.79"/><ellipse cx="74.1" cy="52.8" rx="1.1" ry="0.7" fill="#8c8d5c" opacity="0.51"/><ellipse cx="99.9" cy="56.0" rx="1.2" ry="0.9" fill="#7f8557" opacity="0.60"/><ellipse cx="122.0" cy="56.1" rx="1.4" ry="1.0" fill="#c6c3b8" opacity="0.75"/><ellipse cx="37.0" cy="76.7" rx="1.2" ry="0.6" fill="#c6c3b8" opacity="0.66"/><ellipse cx="71.3" cy="60.9" rx="0.4" ry="0.2" fill="#8c8d5c" opacity="0.48"/><ellipse cx="38.4" cy="71.8" rx="1.6" ry="1.2" fill="#96935f" opacity="0.52"/><ellipse cx="74.0" cy="64.1" rx="1.2" ry="0.7" fill="#5b5a4e" opacity="0.73"/><ellipse cx="106.8" cy="68.3" rx="0.7" ry="0.3" fill="#7f8557" opacity="0.74"/><ellipse cx="3.4" cy="50.2" rx="0.4" ry="0.2" fill="#8c8d5c" opacity="0.75"/><ellipse cx="37.3" cy="56.2" rx="1.1" ry="0.6" fill="#8c8d5c" opacity="0.83"/><ellipse cx="89.8" cy="43.2" rx="0.9" ry="0.6" fill="#5b5a4e" opacity="0.72"/><ellipse cx="126.3" cy="51.6" rx="0.6" ry="0.4" fill="#96935f" opacity="0.74"/><ellipse cx="118.0" cy="75.9" rx="2.1" ry="1.0" fill="#96935f" opacity="0.86"/><ellipse cx="86.7" cy="49.4" rx="0.7" ry="0.5" fill="#6a6858" opacity="0.80"/><ellipse cx="40.8" cy="78.7" rx="1.4" ry="0.6" fill="#c6c3b8" opacity="0.77"/><ellipse cx="6.0" cy="71.9" rx="0.5" ry="0.4" fill="#8c8d5c" opacity="0.49"/><ellipse cx="5.7" cy="57.2" rx="1.5" ry="1.0" fill="#a09c68" opacity="0.48"/><ellipse cx="13.0" cy="42.9" rx="0.8" ry="0.4" fill="#5b5a4e" opacity="0.47"/><ellipse cx="19.5" cy="71.2" rx="0.5" ry="0.4" fill="#6a6858" opacity="0.70"/><ellipse cx="45.6" cy="57.5" rx="0.7" ry="0.4" fill="#8c8d5c" opacity="0.61"/><ellipse cx="53.3" cy="49.4" rx="0.5" ry="0.3" fill="#7f8557" opacity="0.66"/><ellipse cx="65.5" cy="55.4" rx="1.3" ry="0.9" fill="#c6c3b8" opacity="0.76"/><ellipse cx="64.1" cy="59.8" rx="0.9" ry="0.5" fill="#6a6858" opacity="0.58"/><ellipse cx="37.9" cy="58.8" rx="1.2" ry="0.5" fill="#6a6858" opacity="0.62"/><ellipse cx="118.1" cy="65.9" rx="1.1" ry="0.6" fill="#c6c3b8" opacity="0.49"/><ellipse cx="64.2" cy="51.7" rx="0.9" ry="0.6" fill="#6a6858" opacity="0.48"/><ellipse cx="31.6" cy="83.8" rx="1.6" ry="1.0" fill="#5b5a4e" opacity="0.47"/><ellipse cx="37.0" cy="57.3" rx="1.5" ry="0.9" fill="#8c8d5c" opacity="0.81"/><ellipse cx="91.5" cy="74.3" rx="1.2" ry="1.0" fill="#8c8d5c" opacity="0.71"/><ellipse cx="22.2" cy="62.0" rx="1.6" ry="1.1" fill="#6a6858" opacity="0.87"/><ellipse cx="83.5" cy="76.9" rx="2.3" ry="1.8" fill="#8c8d5c" opacity="0.55"/><ellipse cx="84.1" cy="51.2" rx="0.5" ry="0.3" fill="#8e8a6a" opacity="0.53"/><ellipse cx="114.1" cy="64.5" rx="1.8" ry="0.9" fill="#6a6858" opacity="0.82"/><ellipse cx="92.7" cy="74.6" rx="0.5" ry="0.2" fill="#96935f" opacity="0.81"/><ellipse cx="81.2" cy="73.8" rx="2.0" ry="1.3" fill="#5b5a4e" opacity="0.86"/><ellipse cx="95.0" cy="55.7" rx="0.5" ry="0.2" fill="#5b5a4e" opacity="0.62"/><ellipse cx="105.4" cy="52.8" rx="1.1" ry="0.5" fill="#c6c3b8" opacity="0.74"/><ellipse cx="4.5" cy="67.4" rx="0.8" ry="0.4" fill="#7f8557" opacity="0.48"/><ellipse cx="23.9" cy="52.2" rx="0.7" ry="0.5" fill="#7f8557" opacity="0.89"/><ellipse cx="85.7" cy="69.0" rx="1.0" ry="0.7" fill="#8c8d5c" opacity="0.63"/><ellipse cx="75.3" cy="47.2" rx="0.6" ry="0.3" fill="#8e8a6a" opacity="0.89"/><ellipse cx="47.5" cy="56.2" rx="0.6" ry="0.4" fill="#96935f" opacity="0.54"/><ellipse cx="1.5" cy="70.3" rx="1.5" ry="1.0" fill="#c6c3b8" opacity="0.54"/><ellipse cx="92.8" cy="45.4" rx="1.0" ry="0.4" fill="#6a6858" opacity="0.62"/><ellipse cx="28.9" cy="60.7" rx="0.9" ry="0.4" fill="#8c8d5c" opacity="0.61"/><ellipse cx="8.6" cy="53.9" rx="1.0" ry="0.8" fill="#6a6858" opacity="0.84"/><ellipse cx="48.8" cy="45.7" rx="0.4" ry="0.3" fill="#8c8d5c" opacity="0.72"/><ellipse cx="29.4" cy="49.7" rx="0.8" ry="0.4" fill="#7f8557" opacity="0.74"/><ellipse cx="21.5" cy="49.3" rx="0.8" ry="0.5" fill="#96935f" opacity="0.62"/><ellipse cx="95.6" cy="46.1" rx="0.4" ry="0.2" fill="#8c8d5c" opacity="0.54"/><ellipse cx="43.0" cy="42.4" rx="0.9" ry="0.5" fill="#a09c68" opacity="0.58"/><ellipse cx="36.6" cy="70.6" rx="0.7" ry="0.5" fill="#7f8557" opacity="0.86"/><ellipse cx="5.2" cy="54.2" rx="0.7" ry="0.5" fill="#7f8557" opacity="0.76"/><ellipse cx="118.4" cy="50.0" rx="0.7" ry="0.5" fill="#5b5a4e" opacity="0.50"/><ellipse cx="125.4" cy="73.8" rx="2.0" ry="1.1" fill="#5b5a4e" opacity="0.90"/><ellipse cx="107.4" cy="70.2" rx="2.0" ry="0.9" fill="#a09c68" opacity="0.67"/><ellipse cx="11.5" cy="75.4" rx="1.6" ry="0.9" fill="#5b5a4e" opacity="0.54"/><ellipse cx="122.3" cy="58.7" rx="0.7" ry="0.5" fill="#8c8d5c" opacity="0.57"/><ellipse cx="46.8" cy="71.8" rx="0.7" ry="0.5" fill="#7f8557" opacity="0.72"/><ellipse cx="93.9" cy="47.0" rx="0.9" ry="0.6" fill="#5b5a4e" opacity="0.66"/><ellipse cx="64.9" cy="43.2" rx="0.6" ry="0.5" fill="#c6c3b8" opacity="0.53"/><ellipse cx="59.3" cy="62.4" rx="1.3" ry="0.7" fill="#6a6858" opacity="0.59"/><ellipse cx="94.9" cy="61.9" rx="1.3" ry="0.6" fill="#6a6858" opacity="0.51"/><ellipse cx="76.7" cy="71.5" rx="1.1" ry="0.8" fill="#6a6858" opacity="0.71"/><ellipse cx="86.3" cy="83.6" rx="0.5" ry="0.2" fill="#8c8d5c" opacity="0.51"/><ellipse cx="86.6" cy="53.0" rx="0.6" ry="0.4" fill="#7f8557" opacity="0.48"/><ellipse cx="83.0" cy="62.5" rx="0.5" ry="0.3" fill="#96935f" opacity="0.69"/><ellipse cx="16.4" cy="67.9" rx="1.7" ry="0.9" fill="#7f8557" opacity="0.62"/><ellipse cx="83.2" cy="58.0" rx="0.9" ry="0.6" fill="#8c8d5c" opacity="0.75"/><ellipse cx="124.8" cy="54.3" rx="1.2" ry="0.8" fill="#c6c3b8" opacity="0.55"/><ellipse cx="56.5" cy="78.6" rx="1.4" ry="1.1" fill="#96935f" opacity="0.68"/><ellipse cx="7.5" cy="47.7" rx="0.8" ry="0.6" fill="#5b5a4e" opacity="0.48"/><ellipse cx="77.9" cy="60.1" rx="0.8" ry="0.6" fill="#a09c68" opacity="0.76"/><ellipse cx="109.4" cy="45.5" rx="0.5" ry="0.3" fill="#7f8557" opacity="0.88"/><ellipse cx="122.0" cy="61.1" rx="1.1" ry="0.5" fill="#6a6858" opacity="0.79"/><ellipse cx="56.9" cy="54.7" rx="0.8" ry="0.6" fill="#8c8d5c" opacity="0.45"/><ellipse cx="21.6" cy="48.1" rx="0.5" ry="0.2" fill="#7f8557" opacity="0.70"/><ellipse cx="19.8" cy="56.3" rx="0.6" ry="0.5" fill="#5b5a4e" opacity="0.87"/><ellipse cx="42.9" cy="48.2" rx="1.0" ry="0.4" fill="#8c8d5c" opacity="0.89"/><ellipse cx="42.5" cy="59.3" rx="1.5" ry="1.1" fill="#96935f" opacity="0.66"/><ellipse cx="38.5" cy="81.4" rx="0.8" ry="0.6" fill="#7f8557" opacity="0.64"/><ellipse cx="20.1" cy="61.7" rx="0.6" ry="0.3" fill="#a09c68" opacity="0.86"/><ellipse cx="101.7" cy="43.8" rx="0.7" ry="0.3" fill="#5b5a4e" opacity="0.56"/><ellipse cx="70.6" cy="55.7" rx="0.6" ry="0.4" fill="#8e8a6a" opacity="0.75"/><ellipse cx="111.2" cy="82.3" rx="0.9" ry="0.4" fill="#7f8557" opacity="0.55"/><ellipse cx="31.2" cy="60.1" rx="1.5" ry="0.9" fill="#8c8d5c" opacity="0.53"/><ellipse cx="124.8" cy="68.0" rx="0.6" ry="0.4" fill="#a09c68" opacity="0.63"/><ellipse cx="83.0" cy="58.1" rx="0.9" ry="0.5" fill="#8e8a6a" opacity="0.66"/><ellipse cx="71.8" cy="53.5" rx="1.1" ry="0.5" fill="#7f8557" opacity="0.74"/><ellipse cx="32.2" cy="55.6" rx="0.5" ry="0.4" fill="#5b5a4e" opacity="0.72"/><ellipse cx="81.4" cy="72.1" rx="2.1" ry="1.3" fill="#5b5a4e" opacity="0.80"/><ellipse cx="62.7" cy="46.1" rx="0.4" ry="0.3" fill="#6a6858" opacity="0.81"/><ellipse cx="119.4" cy="76.7" rx="1.0" ry="0.6" fill="#6a6858" opacity="0.74"/><ellipse cx="102.7" cy="56.0" rx="0.6" ry="0.3" fill="#7f8557" opacity="0.49"/><ellipse cx="95.8" cy="65.8" rx="0.8" ry="0.4" fill="#8e8a6a" opacity="0.47"/><ellipse cx="53.9" cy="57.2" rx="1.5" ry="0.8" fill="#7f8557" opacity="0.51"/><ellipse cx="103.4" cy="45.9" rx="0.8" ry="0.3" fill="#7f8557" opacity="0.53"/><ellipse cx="79.0" cy="54.9" rx="0.7" ry="0.4" fill="#8c8d5c" opacity="0.79"/><ellipse cx="82.7" cy="62.3" rx="1.5" ry="1.0" fill="#7f8557" opacity="0.84"/><ellipse cx="103.1" cy="74.0" rx="2.0" ry="1.3" fill="#c6c3b8" opacity="0.49"/><ellipse cx="18.6" cy="44.0" rx="0.5" ry="0.4" fill="#5b5a4e" opacity="0.50"/><ellipse cx="17.9" cy="49.3" rx="0.9" ry="0.6" fill="#8e8a6a" opacity="0.50"/><ellipse cx="42.8" cy="60.0" rx="1.0" ry="0.6" fill="#6a6858" opacity="0.48"/><ellipse cx="34.2" cy="75.1" rx="1.5" ry="1.0" fill="#6a6858" opacity="0.64"/><ellipse cx="5.3" cy="44.6" rx="0.7" ry="0.4" fill="#6a6858" opacity="0.71"/><ellipse cx="69.0" cy="63.1" rx="1.7" ry="0.8" fill="#96935f" opacity="0.66"/><ellipse cx="84.5" cy="60.9" rx="1.3" ry="1.0" fill="#6a6858" opacity="0.74"/><ellipse cx="30" cy="80" rx="3" ry="2.5" fill="#55544a" opacity="0.8"/><ellipse cx="45" cy="60" rx="2.5" ry="1.5" fill="#5a594f" opacity="0.8"/></svg></div>
</div></body></html>
